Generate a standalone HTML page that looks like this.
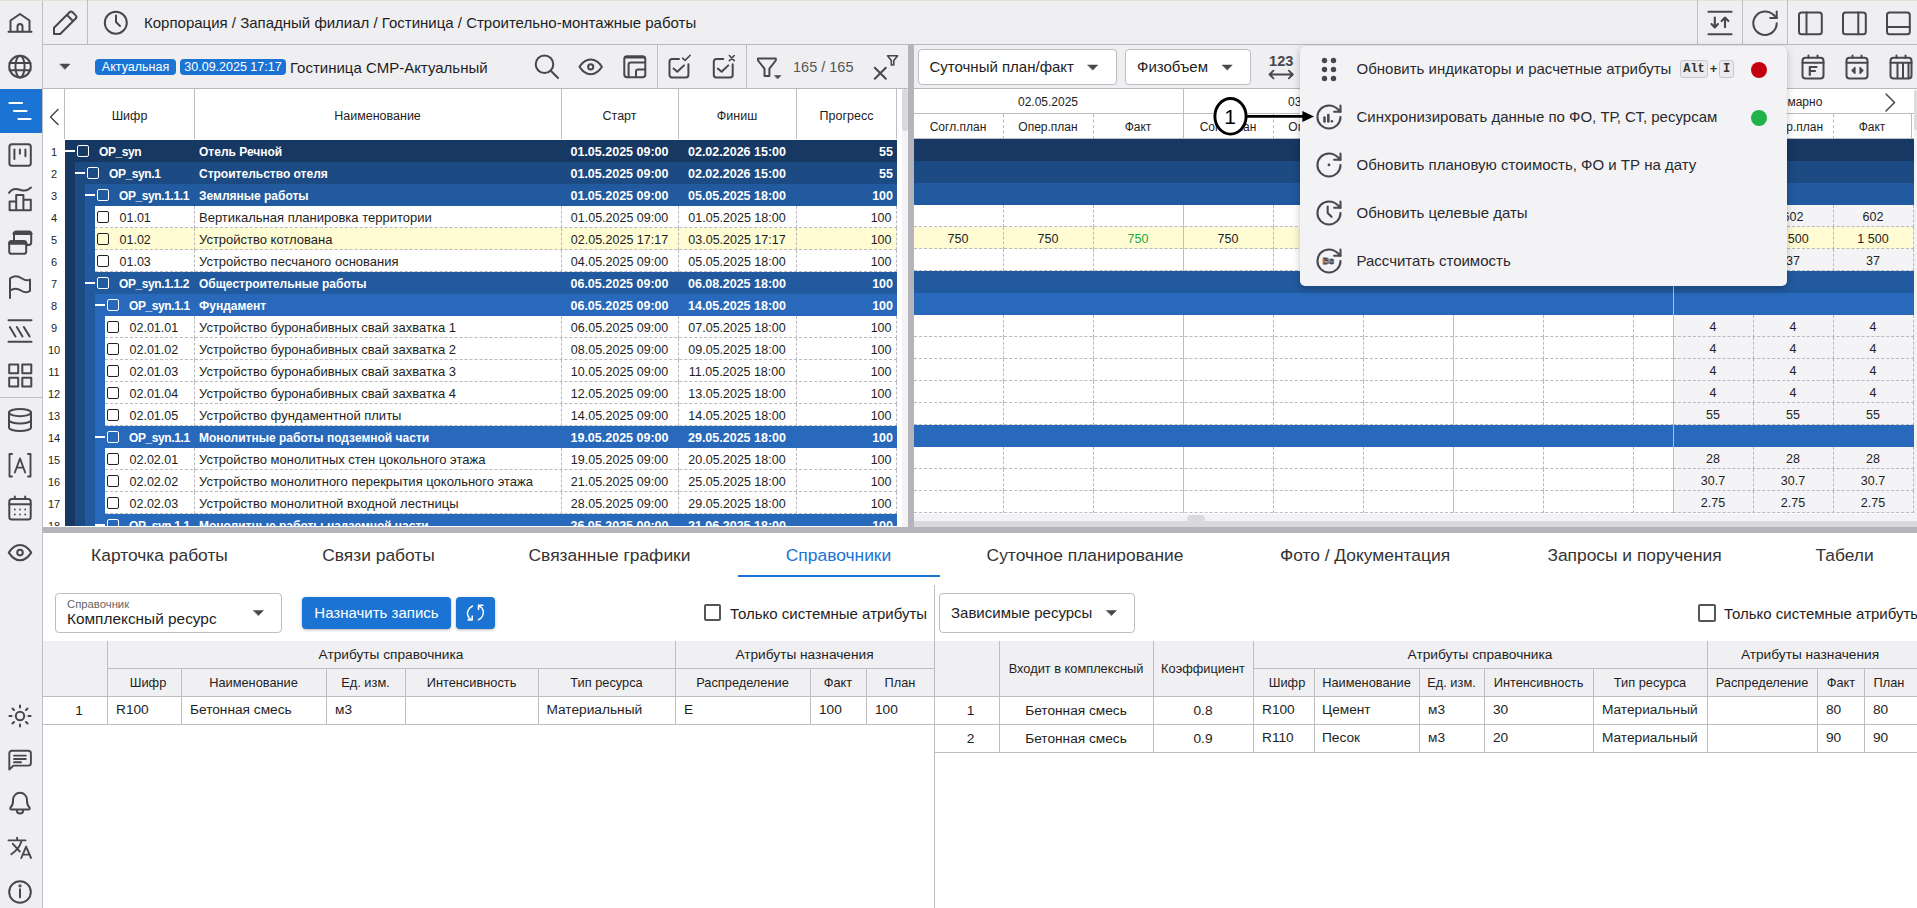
<!DOCTYPE html><html><head><meta charset="utf-8"><style>
*{box-sizing:border-box;margin:0;padding:0}
html,body{width:1917px;height:908px;overflow:hidden;background:#fff;font-family:"Liberation Sans",sans-serif;color:#222}
.t{position:absolute;white-space:nowrap}
svg{overflow:visible}
</style></head><body><div style="position:absolute;left:0px;top:0px;width:42px;height:908px;background:#efeff2;"></div><div style="position:absolute;left:42px;top:0px;width:1px;height:908px;background:#bdbdc4;"></div><div style="position:absolute;left:0px;top:89px;width:42px;height:44px;background:#1b74d3;"></div><div style="position:absolute;left:0px;top:397px;width:42px;height:1px;background:#bdbdc4;"></div><div style="position:absolute;left:43px;top:0px;width:1874px;height:44px;background:#efeff2;"></div><div style="position:absolute;left:0px;top:0px;width:1917px;height:1px;background:#dde5d6;"></div><div style="position:absolute;left:43px;top:44px;width:1874px;height:1px;background:#b8b8bf;"></div><div style="position:absolute;left:87px;top:0px;width:1px;height:44px;background:#bdbdc4;"></div><div class="t" style="left:144px;top:8px;line-height:30px;font-size:15px;color:#1e1e1e;font-weight:400;">Корпорация / Западный филиал / Гостиница / Строительно-монтажные работы</div><div style="position:absolute;left:1697px;top:0px;width:1px;height:44px;background:#bdbdc4;"></div><div style="position:absolute;left:1742px;top:0px;width:1px;height:44px;background:#bdbdc4;"></div><div style="position:absolute;left:1787px;top:0px;width:1px;height:44px;background:#bdbdc4;"></div><div style="position:absolute;left:43px;top:45px;width:865px;height:43px;background:#efeff2;"></div><div style="position:absolute;left:43px;top:88px;width:865px;height:1px;background:#b8b8bf;"></div><div style="position:absolute;left:657px;top:45px;width:1px;height:43px;background:#bdbdc4;"></div><div style="position:absolute;left:746px;top:45px;width:1px;height:43px;background:#bdbdc4;"></div><div style="position:absolute;left:95px;top:59px;width:81px;height:16px;background:#1b74d3;border-radius:4px;"></div><div class="t" style="left:-164.5px;width:600px;text-align:center;top:54.5px;line-height:25.0px;font-size:12.5px;color:#fff;font-weight:400;">Актуальная</div><div style="position:absolute;left:180px;top:59px;width:106px;height:16px;background:#1b74d3;border-radius:4px;"></div><div class="t" style="left:-67px;width:600px;text-align:center;top:54.5px;line-height:25.0px;font-size:12.5px;color:#fff;font-weight:400;">30.09.2025 17:17</div><div class="t" style="left:290px;top:52.5px;line-height:30px;font-size:15px;color:#1e1e1e;font-weight:400;">Гостиница СМР-Актуальный</div><div class="t" style="left:793px;top:52.5px;line-height:29.0px;font-size:14.5px;color:#555;font-weight:400;">165 / 165</div><div style="position:absolute;left:908px;top:45px;width:6px;height:482px;background:#b4b4ba;"></div><div style="position:absolute;left:914px;top:45px;width:1003px;height:43px;background:#efeff2;"></div><div style="position:absolute;left:914px;top:88px;width:1003px;height:1px;background:#b8b8bf;"></div><div style="position:absolute;left:918px;top:49px;width:199px;height:36px;background:#fff;border:1px solid #bdbdc4;border-radius:4px;"></div><div class="t" style="left:929.5px;top:52px;line-height:30px;font-size:15px;color:#1e1e1e;font-weight:400;">Суточный план/факт</div><div style="position:absolute;left:1125px;top:49px;width:126px;height:36px;background:#fff;border:1px solid #bdbdc4;border-radius:4px;"></div><div class="t" style="left:1137px;top:52px;line-height:30px;font-size:15px;color:#1e1e1e;font-weight:400;">Физобъем</div><div style="position:absolute;left:43px;top:89px;width:854px;height:437px;overflow:hidden;background:#fff"><div style="position:absolute;left:21px;top:0px;width:1px;height:50px;background:#bdbdc4;"></div><div style="position:absolute;left:151px;top:0px;width:1px;height:50px;background:#bdbdc4;"></div><div style="position:absolute;left:518px;top:0px;width:1px;height:50px;background:#bdbdc4;"></div><div style="position:absolute;left:635px;top:0px;width:1px;height:50px;background:#bdbdc4;"></div><div style="position:absolute;left:753px;top:0px;width:1px;height:50px;background:#bdbdc4;"></div><div style="position:absolute;left:853px;top:0px;width:1px;height:50px;background:#bdbdc4;"></div><div class="t" style="left:-213.5px;width:600px;text-align:center;top:14.5px;line-height:25.0px;font-size:12.5px;color:#1e1e1e;font-weight:400;">Шифр</div><div class="t" style="left:34.5px;width:600px;text-align:center;top:14.5px;line-height:25.0px;font-size:12.5px;color:#1e1e1e;font-weight:400;">Наименование</div><div class="t" style="left:276.5px;width:600px;text-align:center;top:14.5px;line-height:25.0px;font-size:12.5px;color:#1e1e1e;font-weight:400;">Старт</div><div class="t" style="left:394px;width:600px;text-align:center;top:14.5px;line-height:25.0px;font-size:12.5px;color:#1e1e1e;font-weight:400;">Финиш</div><div class="t" style="left:503.5px;width:600px;text-align:center;top:14.5px;line-height:25.0px;font-size:12.5px;color:#1e1e1e;font-weight:400;">Прогресс</div><div style="position:absolute;left:0px;top:51px;width:21px;height:400px;background:#fff;"></div><div class="t" style="left:-289px;width:600px;text-align:center;top:52.19999999999999px;line-height:22px;font-size:11px;color:#1e1e1e;font-weight:400;">1</div><div style="position:absolute;left:22px;top:51px;width:832px;height:22px;background:#173862;"></div><div style="position:absolute;left:22px;top:61px;width:10px;height:2px;background:#fff;"></div><div style="position:absolute;left:34px;top:56px;width:12px;height:12px;border:1.5px solid #fff;border-radius:2px;"></div><div class="t" style="left:56px;top:51.19999999999999px;line-height:24px;font-size:12px;color:#fff;font-weight:700;letter-spacing:-0.4px">OP_syn</div><div class="t" style="left:156px;top:51.19999999999999px;line-height:24px;font-size:12px;color:#fff;font-weight:700;">Отель Речной</div><div class="t" style="left:276.5px;width:600px;text-align:center;top:50.69999999999999px;line-height:25.0px;font-size:12.5px;color:#fff;font-weight:700;">01.05.2025 09:00</div><div class="t" style="left:394px;width:600px;text-align:center;top:50.69999999999999px;line-height:25.0px;font-size:12.5px;color:#fff;font-weight:700;">02.02.2026 15:00</div><div class="t" style="left:250px;width:600px;text-align:right;top:50.69999999999999px;line-height:25.0px;font-size:12.5px;color:#fff;font-weight:700;">55</div><div class="t" style="left:-289px;width:600px;text-align:center;top:74.19999999999999px;line-height:22px;font-size:11px;color:#1e1e1e;font-weight:400;">2</div><div style="position:absolute;left:22px;top:73px;width:10px;height:22px;background:#173862;"></div><div style="position:absolute;left:32px;top:73px;width:822px;height:22px;background:#1c4a82;"></div><div style="position:absolute;left:32px;top:83px;width:10px;height:2px;background:#fff;"></div><div style="position:absolute;left:44px;top:78px;width:12px;height:12px;border:1.5px solid #fff;border-radius:2px;"></div><div class="t" style="left:66px;top:73.19999999999999px;line-height:24px;font-size:12px;color:#fff;font-weight:700;letter-spacing:-0.4px">OP_syn.1</div><div class="t" style="left:156px;top:73.19999999999999px;line-height:24px;font-size:12px;color:#fff;font-weight:700;">Строительство отеля</div><div class="t" style="left:276.5px;width:600px;text-align:center;top:72.69999999999999px;line-height:25.0px;font-size:12.5px;color:#fff;font-weight:700;">01.05.2025 09:00</div><div class="t" style="left:394px;width:600px;text-align:center;top:72.69999999999999px;line-height:25.0px;font-size:12.5px;color:#fff;font-weight:700;">02.02.2026 15:00</div><div class="t" style="left:250px;width:600px;text-align:right;top:72.69999999999999px;line-height:25.0px;font-size:12.5px;color:#fff;font-weight:700;">55</div><div class="t" style="left:-289px;width:600px;text-align:center;top:96.19999999999999px;line-height:22px;font-size:11px;color:#1e1e1e;font-weight:400;">3</div><div style="position:absolute;left:22px;top:95px;width:10px;height:22px;background:#173862;"></div><div style="position:absolute;left:32px;top:95px;width:10px;height:22px;background:#1c4a82;"></div><div style="position:absolute;left:42px;top:95px;width:812px;height:22px;background:#215a9e;"></div><div style="position:absolute;left:42px;top:105px;width:10px;height:2px;background:#fff;"></div><div style="position:absolute;left:54px;top:100px;width:12px;height:12px;border:1.5px solid #fff;border-radius:2px;"></div><div class="t" style="left:76px;top:95.19999999999999px;line-height:24px;font-size:12px;color:#fff;font-weight:700;letter-spacing:-0.4px">OP_syn.1.1.1</div><div class="t" style="left:156px;top:95.19999999999999px;line-height:24px;font-size:12px;color:#fff;font-weight:700;">Земляные работы</div><div class="t" style="left:276.5px;width:600px;text-align:center;top:94.69999999999999px;line-height:25.0px;font-size:12.5px;color:#fff;font-weight:700;">01.05.2025 09:00</div><div class="t" style="left:394px;width:600px;text-align:center;top:94.69999999999999px;line-height:25.0px;font-size:12.5px;color:#fff;font-weight:700;">05.05.2025 18:00</div><div class="t" style="left:250px;width:600px;text-align:right;top:94.69999999999999px;line-height:25.0px;font-size:12.5px;color:#fff;font-weight:700;">100</div><div class="t" style="left:-289px;width:600px;text-align:center;top:118.19999999999999px;line-height:22px;font-size:11px;color:#1e1e1e;font-weight:400;">4</div><div style="position:absolute;left:22px;top:117px;width:10px;height:22px;background:#173862;"></div><div style="position:absolute;left:32px;top:117px;width:10px;height:22px;background:#1c4a82;"></div><div style="position:absolute;left:42px;top:117px;width:10px;height:22px;background:#215a9e;"></div><div style="position:absolute;left:52px;top:117px;width:802px;height:22px;background:#fff;"></div><div style="position:absolute;left:52px;top:138px;width:802px;height:1px;border-top:1px dashed #b9b9be;"></div><div style="position:absolute;left:151px;top:117px;width:1px;height:22px;border-left:1px dashed #b9b9be;"></div><div style="position:absolute;left:518px;top:117px;width:1px;height:22px;border-left:1px dashed #b9b9be;"></div><div style="position:absolute;left:635px;top:117px;width:1px;height:22px;border-left:1px dashed #b9b9be;"></div><div style="position:absolute;left:753px;top:117px;width:1px;height:22px;border-left:1px dashed #b9b9be;"></div><div style="position:absolute;left:853px;top:117px;width:1px;height:22px;border-left:1px dashed #b9b9be;"></div><div style="position:absolute;left:54px;top:122px;width:12px;height:12px;border:1.5px solid #222;border-radius:2px;"></div><div class="t" style="left:76.5px;top:116.69999999999999px;line-height:25.0px;font-size:12.5px;color:#1e1e1e;font-weight:400;">01.01</div><div class="t" style="left:156px;top:116.19999999999999px;line-height:26px;font-size:13px;color:#1e1e1e;font-weight:400;">Вертикальная планировка территории</div><div class="t" style="left:276.5px;width:600px;text-align:center;top:116.69999999999999px;line-height:25.0px;font-size:12.5px;color:#1e1e1e;font-weight:400;">01.05.2025 09:00</div><div class="t" style="left:394px;width:600px;text-align:center;top:116.69999999999999px;line-height:25.0px;font-size:12.5px;color:#1e1e1e;font-weight:400;">01.05.2025 18:00</div><div class="t" style="left:248.5px;width:600px;text-align:right;top:116.69999999999999px;line-height:25.0px;font-size:12.5px;color:#1e1e1e;font-weight:400;">100</div><div class="t" style="left:-289px;width:600px;text-align:center;top:140.2px;line-height:22px;font-size:11px;color:#1e1e1e;font-weight:400;">5</div><div style="position:absolute;left:22px;top:139px;width:10px;height:22px;background:#173862;"></div><div style="position:absolute;left:32px;top:139px;width:10px;height:22px;background:#1c4a82;"></div><div style="position:absolute;left:42px;top:139px;width:10px;height:22px;background:#215a9e;"></div><div style="position:absolute;left:52px;top:139px;width:802px;height:22px;background:#fffbd3;"></div><div style="position:absolute;left:52px;top:160px;width:802px;height:1px;border-top:1px dashed #b9b9be;"></div><div style="position:absolute;left:151px;top:139px;width:1px;height:22px;border-left:1px dashed #b9b9be;"></div><div style="position:absolute;left:518px;top:139px;width:1px;height:22px;border-left:1px dashed #b9b9be;"></div><div style="position:absolute;left:635px;top:139px;width:1px;height:22px;border-left:1px dashed #b9b9be;"></div><div style="position:absolute;left:753px;top:139px;width:1px;height:22px;border-left:1px dashed #b9b9be;"></div><div style="position:absolute;left:853px;top:139px;width:1px;height:22px;border-left:1px dashed #b9b9be;"></div><div style="position:absolute;left:54px;top:144px;width:12px;height:12px;border:1.5px solid #222;border-radius:2px;"></div><div class="t" style="left:76.5px;top:138.7px;line-height:25.0px;font-size:12.5px;color:#1e1e1e;font-weight:400;">01.02</div><div class="t" style="left:156px;top:138.2px;line-height:26px;font-size:13px;color:#1e1e1e;font-weight:400;">Устройство котлована</div><div class="t" style="left:276.5px;width:600px;text-align:center;top:138.7px;line-height:25.0px;font-size:12.5px;color:#1e1e1e;font-weight:400;">02.05.2025 17:17</div><div class="t" style="left:394px;width:600px;text-align:center;top:138.7px;line-height:25.0px;font-size:12.5px;color:#1e1e1e;font-weight:400;">03.05.2025 17:17</div><div class="t" style="left:248.5px;width:600px;text-align:right;top:138.7px;line-height:25.0px;font-size:12.5px;color:#1e1e1e;font-weight:400;">100</div><div class="t" style="left:-289px;width:600px;text-align:center;top:162.2px;line-height:22px;font-size:11px;color:#1e1e1e;font-weight:400;">6</div><div style="position:absolute;left:22px;top:161px;width:10px;height:22px;background:#173862;"></div><div style="position:absolute;left:32px;top:161px;width:10px;height:22px;background:#1c4a82;"></div><div style="position:absolute;left:42px;top:161px;width:10px;height:22px;background:#215a9e;"></div><div style="position:absolute;left:52px;top:161px;width:802px;height:22px;background:#fff;"></div><div style="position:absolute;left:52px;top:182px;width:802px;height:1px;border-top:1px dashed #b9b9be;"></div><div style="position:absolute;left:151px;top:161px;width:1px;height:22px;border-left:1px dashed #b9b9be;"></div><div style="position:absolute;left:518px;top:161px;width:1px;height:22px;border-left:1px dashed #b9b9be;"></div><div style="position:absolute;left:635px;top:161px;width:1px;height:22px;border-left:1px dashed #b9b9be;"></div><div style="position:absolute;left:753px;top:161px;width:1px;height:22px;border-left:1px dashed #b9b9be;"></div><div style="position:absolute;left:853px;top:161px;width:1px;height:22px;border-left:1px dashed #b9b9be;"></div><div style="position:absolute;left:54px;top:166px;width:12px;height:12px;border:1.5px solid #222;border-radius:2px;"></div><div class="t" style="left:76.5px;top:160.7px;line-height:25.0px;font-size:12.5px;color:#1e1e1e;font-weight:400;">01.03</div><div class="t" style="left:156px;top:160.2px;line-height:26px;font-size:13px;color:#1e1e1e;font-weight:400;">Устройство песчаного основания</div><div class="t" style="left:276.5px;width:600px;text-align:center;top:160.7px;line-height:25.0px;font-size:12.5px;color:#1e1e1e;font-weight:400;">04.05.2025 09:00</div><div class="t" style="left:394px;width:600px;text-align:center;top:160.7px;line-height:25.0px;font-size:12.5px;color:#1e1e1e;font-weight:400;">05.05.2025 18:00</div><div class="t" style="left:248.5px;width:600px;text-align:right;top:160.7px;line-height:25.0px;font-size:12.5px;color:#1e1e1e;font-weight:400;">100</div><div class="t" style="left:-289px;width:600px;text-align:center;top:184.2px;line-height:22px;font-size:11px;color:#1e1e1e;font-weight:400;">7</div><div style="position:absolute;left:22px;top:183px;width:10px;height:22px;background:#173862;"></div><div style="position:absolute;left:32px;top:183px;width:10px;height:22px;background:#1c4a82;"></div><div style="position:absolute;left:42px;top:183px;width:812px;height:22px;background:#215a9e;"></div><div style="position:absolute;left:42px;top:193px;width:10px;height:2px;background:#fff;"></div><div style="position:absolute;left:54px;top:188px;width:12px;height:12px;border:1.5px solid #fff;border-radius:2px;"></div><div class="t" style="left:76px;top:183.2px;line-height:24px;font-size:12px;color:#fff;font-weight:700;letter-spacing:-0.4px">OP_syn.1.1.2</div><div class="t" style="left:156px;top:183.2px;line-height:24px;font-size:12px;color:#fff;font-weight:700;">Общестроительные работы</div><div class="t" style="left:276.5px;width:600px;text-align:center;top:182.7px;line-height:25.0px;font-size:12.5px;color:#fff;font-weight:700;">06.05.2025 09:00</div><div class="t" style="left:394px;width:600px;text-align:center;top:182.7px;line-height:25.0px;font-size:12.5px;color:#fff;font-weight:700;">06.08.2025 18:00</div><div class="t" style="left:250px;width:600px;text-align:right;top:182.7px;line-height:25.0px;font-size:12.5px;color:#fff;font-weight:700;">100</div><div class="t" style="left:-289px;width:600px;text-align:center;top:206.2px;line-height:22px;font-size:11px;color:#1e1e1e;font-weight:400;">8</div><div style="position:absolute;left:22px;top:205px;width:10px;height:22px;background:#173862;"></div><div style="position:absolute;left:32px;top:205px;width:10px;height:22px;background:#1c4a82;"></div><div style="position:absolute;left:42px;top:205px;width:10px;height:22px;background:#215a9e;"></div><div style="position:absolute;left:52px;top:205px;width:802px;height:22px;background:#2869bb;"></div><div style="position:absolute;left:52px;top:215px;width:10px;height:2px;background:#fff;"></div><div style="position:absolute;left:64px;top:210px;width:12px;height:12px;border:1.5px solid #fff;border-radius:2px;"></div><div class="t" style="left:86px;top:205.2px;line-height:24px;font-size:12px;color:#fff;font-weight:700;letter-spacing:-0.4px">OP_syn.1.1</div><div class="t" style="left:156px;top:205.2px;line-height:24px;font-size:12px;color:#fff;font-weight:700;">Фундамент</div><div class="t" style="left:276.5px;width:600px;text-align:center;top:204.7px;line-height:25.0px;font-size:12.5px;color:#fff;font-weight:700;">06.05.2025 09:00</div><div class="t" style="left:394px;width:600px;text-align:center;top:204.7px;line-height:25.0px;font-size:12.5px;color:#fff;font-weight:700;">14.05.2025 18:00</div><div class="t" style="left:250px;width:600px;text-align:right;top:204.7px;line-height:25.0px;font-size:12.5px;color:#fff;font-weight:700;">100</div><div class="t" style="left:-289px;width:600px;text-align:center;top:228.2px;line-height:22px;font-size:11px;color:#1e1e1e;font-weight:400;">9</div><div style="position:absolute;left:22px;top:227px;width:10px;height:22px;background:#173862;"></div><div style="position:absolute;left:32px;top:227px;width:10px;height:22px;background:#1c4a82;"></div><div style="position:absolute;left:42px;top:227px;width:10px;height:22px;background:#215a9e;"></div><div style="position:absolute;left:52px;top:227px;width:10px;height:22px;background:#2869bb;"></div><div style="position:absolute;left:62px;top:227px;width:792px;height:22px;background:#fff;"></div><div style="position:absolute;left:62px;top:248px;width:792px;height:1px;border-top:1px dashed #b9b9be;"></div><div style="position:absolute;left:151px;top:227px;width:1px;height:22px;border-left:1px dashed #b9b9be;"></div><div style="position:absolute;left:518px;top:227px;width:1px;height:22px;border-left:1px dashed #b9b9be;"></div><div style="position:absolute;left:635px;top:227px;width:1px;height:22px;border-left:1px dashed #b9b9be;"></div><div style="position:absolute;left:753px;top:227px;width:1px;height:22px;border-left:1px dashed #b9b9be;"></div><div style="position:absolute;left:853px;top:227px;width:1px;height:22px;border-left:1px dashed #b9b9be;"></div><div style="position:absolute;left:64px;top:232px;width:12px;height:12px;border:1.5px solid #222;border-radius:2px;"></div><div class="t" style="left:86.5px;top:226.7px;line-height:25.0px;font-size:12.5px;color:#1e1e1e;font-weight:400;">02.01.01</div><div class="t" style="left:156px;top:226.2px;line-height:26px;font-size:13px;color:#1e1e1e;font-weight:400;">Устройство буронабивных свай захватка 1</div><div class="t" style="left:276.5px;width:600px;text-align:center;top:226.7px;line-height:25.0px;font-size:12.5px;color:#1e1e1e;font-weight:400;">06.05.2025 09:00</div><div class="t" style="left:394px;width:600px;text-align:center;top:226.7px;line-height:25.0px;font-size:12.5px;color:#1e1e1e;font-weight:400;">07.05.2025 18:00</div><div class="t" style="left:248.5px;width:600px;text-align:right;top:226.7px;line-height:25.0px;font-size:12.5px;color:#1e1e1e;font-weight:400;">100</div><div class="t" style="left:-289px;width:600px;text-align:center;top:250.2px;line-height:22px;font-size:11px;color:#1e1e1e;font-weight:400;">10</div><div style="position:absolute;left:22px;top:249px;width:10px;height:22px;background:#173862;"></div><div style="position:absolute;left:32px;top:249px;width:10px;height:22px;background:#1c4a82;"></div><div style="position:absolute;left:42px;top:249px;width:10px;height:22px;background:#215a9e;"></div><div style="position:absolute;left:52px;top:249px;width:10px;height:22px;background:#2869bb;"></div><div style="position:absolute;left:62px;top:249px;width:792px;height:22px;background:#fff;"></div><div style="position:absolute;left:62px;top:270px;width:792px;height:1px;border-top:1px dashed #b9b9be;"></div><div style="position:absolute;left:151px;top:249px;width:1px;height:22px;border-left:1px dashed #b9b9be;"></div><div style="position:absolute;left:518px;top:249px;width:1px;height:22px;border-left:1px dashed #b9b9be;"></div><div style="position:absolute;left:635px;top:249px;width:1px;height:22px;border-left:1px dashed #b9b9be;"></div><div style="position:absolute;left:753px;top:249px;width:1px;height:22px;border-left:1px dashed #b9b9be;"></div><div style="position:absolute;left:853px;top:249px;width:1px;height:22px;border-left:1px dashed #b9b9be;"></div><div style="position:absolute;left:64px;top:254px;width:12px;height:12px;border:1.5px solid #222;border-radius:2px;"></div><div class="t" style="left:86.5px;top:248.7px;line-height:25.0px;font-size:12.5px;color:#1e1e1e;font-weight:400;">02.01.02</div><div class="t" style="left:156px;top:248.2px;line-height:26px;font-size:13px;color:#1e1e1e;font-weight:400;">Устройство буронабивных свай захватка 2</div><div class="t" style="left:276.5px;width:600px;text-align:center;top:248.7px;line-height:25.0px;font-size:12.5px;color:#1e1e1e;font-weight:400;">08.05.2025 09:00</div><div class="t" style="left:394px;width:600px;text-align:center;top:248.7px;line-height:25.0px;font-size:12.5px;color:#1e1e1e;font-weight:400;">09.05.2025 18:00</div><div class="t" style="left:248.5px;width:600px;text-align:right;top:248.7px;line-height:25.0px;font-size:12.5px;color:#1e1e1e;font-weight:400;">100</div><div class="t" style="left:-289px;width:600px;text-align:center;top:272.2px;line-height:22px;font-size:11px;color:#1e1e1e;font-weight:400;">11</div><div style="position:absolute;left:22px;top:271px;width:10px;height:22px;background:#173862;"></div><div style="position:absolute;left:32px;top:271px;width:10px;height:22px;background:#1c4a82;"></div><div style="position:absolute;left:42px;top:271px;width:10px;height:22px;background:#215a9e;"></div><div style="position:absolute;left:52px;top:271px;width:10px;height:22px;background:#2869bb;"></div><div style="position:absolute;left:62px;top:271px;width:792px;height:22px;background:#fff;"></div><div style="position:absolute;left:62px;top:292px;width:792px;height:1px;border-top:1px dashed #b9b9be;"></div><div style="position:absolute;left:151px;top:271px;width:1px;height:22px;border-left:1px dashed #b9b9be;"></div><div style="position:absolute;left:518px;top:271px;width:1px;height:22px;border-left:1px dashed #b9b9be;"></div><div style="position:absolute;left:635px;top:271px;width:1px;height:22px;border-left:1px dashed #b9b9be;"></div><div style="position:absolute;left:753px;top:271px;width:1px;height:22px;border-left:1px dashed #b9b9be;"></div><div style="position:absolute;left:853px;top:271px;width:1px;height:22px;border-left:1px dashed #b9b9be;"></div><div style="position:absolute;left:64px;top:276px;width:12px;height:12px;border:1.5px solid #222;border-radius:2px;"></div><div class="t" style="left:86.5px;top:270.7px;line-height:25.0px;font-size:12.5px;color:#1e1e1e;font-weight:400;">02.01.03</div><div class="t" style="left:156px;top:270.2px;line-height:26px;font-size:13px;color:#1e1e1e;font-weight:400;">Устройство буронабивных свай захватка 3</div><div class="t" style="left:276.5px;width:600px;text-align:center;top:270.7px;line-height:25.0px;font-size:12.5px;color:#1e1e1e;font-weight:400;">10.05.2025 09:00</div><div class="t" style="left:394px;width:600px;text-align:center;top:270.7px;line-height:25.0px;font-size:12.5px;color:#1e1e1e;font-weight:400;">11.05.2025 18:00</div><div class="t" style="left:248.5px;width:600px;text-align:right;top:270.7px;line-height:25.0px;font-size:12.5px;color:#1e1e1e;font-weight:400;">100</div><div class="t" style="left:-289px;width:600px;text-align:center;top:294.2px;line-height:22px;font-size:11px;color:#1e1e1e;font-weight:400;">12</div><div style="position:absolute;left:22px;top:293px;width:10px;height:22px;background:#173862;"></div><div style="position:absolute;left:32px;top:293px;width:10px;height:22px;background:#1c4a82;"></div><div style="position:absolute;left:42px;top:293px;width:10px;height:22px;background:#215a9e;"></div><div style="position:absolute;left:52px;top:293px;width:10px;height:22px;background:#2869bb;"></div><div style="position:absolute;left:62px;top:293px;width:792px;height:22px;background:#fff;"></div><div style="position:absolute;left:62px;top:314px;width:792px;height:1px;border-top:1px dashed #b9b9be;"></div><div style="position:absolute;left:151px;top:293px;width:1px;height:22px;border-left:1px dashed #b9b9be;"></div><div style="position:absolute;left:518px;top:293px;width:1px;height:22px;border-left:1px dashed #b9b9be;"></div><div style="position:absolute;left:635px;top:293px;width:1px;height:22px;border-left:1px dashed #b9b9be;"></div><div style="position:absolute;left:753px;top:293px;width:1px;height:22px;border-left:1px dashed #b9b9be;"></div><div style="position:absolute;left:853px;top:293px;width:1px;height:22px;border-left:1px dashed #b9b9be;"></div><div style="position:absolute;left:64px;top:298px;width:12px;height:12px;border:1.5px solid #222;border-radius:2px;"></div><div class="t" style="left:86.5px;top:292.7px;line-height:25.0px;font-size:12.5px;color:#1e1e1e;font-weight:400;">02.01.04</div><div class="t" style="left:156px;top:292.2px;line-height:26px;font-size:13px;color:#1e1e1e;font-weight:400;">Устройство буронабивных свай захватка 4</div><div class="t" style="left:276.5px;width:600px;text-align:center;top:292.7px;line-height:25.0px;font-size:12.5px;color:#1e1e1e;font-weight:400;">12.05.2025 09:00</div><div class="t" style="left:394px;width:600px;text-align:center;top:292.7px;line-height:25.0px;font-size:12.5px;color:#1e1e1e;font-weight:400;">13.05.2025 18:00</div><div class="t" style="left:248.5px;width:600px;text-align:right;top:292.7px;line-height:25.0px;font-size:12.5px;color:#1e1e1e;font-weight:400;">100</div><div class="t" style="left:-289px;width:600px;text-align:center;top:316.2px;line-height:22px;font-size:11px;color:#1e1e1e;font-weight:400;">13</div><div style="position:absolute;left:22px;top:315px;width:10px;height:22px;background:#173862;"></div><div style="position:absolute;left:32px;top:315px;width:10px;height:22px;background:#1c4a82;"></div><div style="position:absolute;left:42px;top:315px;width:10px;height:22px;background:#215a9e;"></div><div style="position:absolute;left:52px;top:315px;width:10px;height:22px;background:#2869bb;"></div><div style="position:absolute;left:62px;top:315px;width:792px;height:22px;background:#fff;"></div><div style="position:absolute;left:62px;top:336px;width:792px;height:1px;border-top:1px dashed #b9b9be;"></div><div style="position:absolute;left:151px;top:315px;width:1px;height:22px;border-left:1px dashed #b9b9be;"></div><div style="position:absolute;left:518px;top:315px;width:1px;height:22px;border-left:1px dashed #b9b9be;"></div><div style="position:absolute;left:635px;top:315px;width:1px;height:22px;border-left:1px dashed #b9b9be;"></div><div style="position:absolute;left:753px;top:315px;width:1px;height:22px;border-left:1px dashed #b9b9be;"></div><div style="position:absolute;left:853px;top:315px;width:1px;height:22px;border-left:1px dashed #b9b9be;"></div><div style="position:absolute;left:64px;top:320px;width:12px;height:12px;border:1.5px solid #222;border-radius:2px;"></div><div class="t" style="left:86.5px;top:314.7px;line-height:25.0px;font-size:12.5px;color:#1e1e1e;font-weight:400;">02.01.05</div><div class="t" style="left:156px;top:314.2px;line-height:26px;font-size:13px;color:#1e1e1e;font-weight:400;">Устройство фундаментной плиты</div><div class="t" style="left:276.5px;width:600px;text-align:center;top:314.7px;line-height:25.0px;font-size:12.5px;color:#1e1e1e;font-weight:400;">14.05.2025 09:00</div><div class="t" style="left:394px;width:600px;text-align:center;top:314.7px;line-height:25.0px;font-size:12.5px;color:#1e1e1e;font-weight:400;">14.05.2025 18:00</div><div class="t" style="left:248.5px;width:600px;text-align:right;top:314.7px;line-height:25.0px;font-size:12.5px;color:#1e1e1e;font-weight:400;">100</div><div class="t" style="left:-289px;width:600px;text-align:center;top:338.2px;line-height:22px;font-size:11px;color:#1e1e1e;font-weight:400;">14</div><div style="position:absolute;left:22px;top:337px;width:10px;height:22px;background:#173862;"></div><div style="position:absolute;left:32px;top:337px;width:10px;height:22px;background:#1c4a82;"></div><div style="position:absolute;left:42px;top:337px;width:10px;height:22px;background:#215a9e;"></div><div style="position:absolute;left:52px;top:337px;width:802px;height:22px;background:#2869bb;"></div><div style="position:absolute;left:52px;top:347px;width:10px;height:2px;background:#fff;"></div><div style="position:absolute;left:64px;top:342px;width:12px;height:12px;border:1.5px solid #fff;border-radius:2px;"></div><div class="t" style="left:86px;top:337.2px;line-height:24px;font-size:12px;color:#fff;font-weight:700;letter-spacing:-0.4px">OP_syn.1.1</div><div class="t" style="left:156px;top:337.2px;line-height:24px;font-size:12px;color:#fff;font-weight:700;">Монолитные работы подземной части</div><div class="t" style="left:276.5px;width:600px;text-align:center;top:336.7px;line-height:25.0px;font-size:12.5px;color:#fff;font-weight:700;">19.05.2025 09:00</div><div class="t" style="left:394px;width:600px;text-align:center;top:336.7px;line-height:25.0px;font-size:12.5px;color:#fff;font-weight:700;">29.05.2025 18:00</div><div class="t" style="left:250px;width:600px;text-align:right;top:336.7px;line-height:25.0px;font-size:12.5px;color:#fff;font-weight:700;">100</div><div class="t" style="left:-289px;width:600px;text-align:center;top:360.2px;line-height:22px;font-size:11px;color:#1e1e1e;font-weight:400;">15</div><div style="position:absolute;left:22px;top:359px;width:10px;height:22px;background:#173862;"></div><div style="position:absolute;left:32px;top:359px;width:10px;height:22px;background:#1c4a82;"></div><div style="position:absolute;left:42px;top:359px;width:10px;height:22px;background:#215a9e;"></div><div style="position:absolute;left:52px;top:359px;width:10px;height:22px;background:#2869bb;"></div><div style="position:absolute;left:62px;top:359px;width:792px;height:22px;background:#fff;"></div><div style="position:absolute;left:62px;top:380px;width:792px;height:1px;border-top:1px dashed #b9b9be;"></div><div style="position:absolute;left:151px;top:359px;width:1px;height:22px;border-left:1px dashed #b9b9be;"></div><div style="position:absolute;left:518px;top:359px;width:1px;height:22px;border-left:1px dashed #b9b9be;"></div><div style="position:absolute;left:635px;top:359px;width:1px;height:22px;border-left:1px dashed #b9b9be;"></div><div style="position:absolute;left:753px;top:359px;width:1px;height:22px;border-left:1px dashed #b9b9be;"></div><div style="position:absolute;left:853px;top:359px;width:1px;height:22px;border-left:1px dashed #b9b9be;"></div><div style="position:absolute;left:64px;top:364px;width:12px;height:12px;border:1.5px solid #222;border-radius:2px;"></div><div class="t" style="left:86.5px;top:358.7px;line-height:25.0px;font-size:12.5px;color:#1e1e1e;font-weight:400;">02.02.01</div><div class="t" style="left:156px;top:358.2px;line-height:26px;font-size:13px;color:#1e1e1e;font-weight:400;">Устройство монолитных стен цокольного этажа</div><div class="t" style="left:276.5px;width:600px;text-align:center;top:358.7px;line-height:25.0px;font-size:12.5px;color:#1e1e1e;font-weight:400;">19.05.2025 09:00</div><div class="t" style="left:394px;width:600px;text-align:center;top:358.7px;line-height:25.0px;font-size:12.5px;color:#1e1e1e;font-weight:400;">20.05.2025 18:00</div><div class="t" style="left:248.5px;width:600px;text-align:right;top:358.7px;line-height:25.0px;font-size:12.5px;color:#1e1e1e;font-weight:400;">100</div><div class="t" style="left:-289px;width:600px;text-align:center;top:382.2px;line-height:22px;font-size:11px;color:#1e1e1e;font-weight:400;">16</div><div style="position:absolute;left:22px;top:381px;width:10px;height:22px;background:#173862;"></div><div style="position:absolute;left:32px;top:381px;width:10px;height:22px;background:#1c4a82;"></div><div style="position:absolute;left:42px;top:381px;width:10px;height:22px;background:#215a9e;"></div><div style="position:absolute;left:52px;top:381px;width:10px;height:22px;background:#2869bb;"></div><div style="position:absolute;left:62px;top:381px;width:792px;height:22px;background:#fff;"></div><div style="position:absolute;left:62px;top:402px;width:792px;height:1px;border-top:1px dashed #b9b9be;"></div><div style="position:absolute;left:151px;top:381px;width:1px;height:22px;border-left:1px dashed #b9b9be;"></div><div style="position:absolute;left:518px;top:381px;width:1px;height:22px;border-left:1px dashed #b9b9be;"></div><div style="position:absolute;left:635px;top:381px;width:1px;height:22px;border-left:1px dashed #b9b9be;"></div><div style="position:absolute;left:753px;top:381px;width:1px;height:22px;border-left:1px dashed #b9b9be;"></div><div style="position:absolute;left:853px;top:381px;width:1px;height:22px;border-left:1px dashed #b9b9be;"></div><div style="position:absolute;left:64px;top:386px;width:12px;height:12px;border:1.5px solid #222;border-radius:2px;"></div><div class="t" style="left:86.5px;top:380.7px;line-height:25.0px;font-size:12.5px;color:#1e1e1e;font-weight:400;">02.02.02</div><div class="t" style="left:156px;top:380.2px;line-height:26px;font-size:13px;color:#1e1e1e;font-weight:400;">Устройство монолитного перекрытия цокольного этажа</div><div class="t" style="left:276.5px;width:600px;text-align:center;top:380.7px;line-height:25.0px;font-size:12.5px;color:#1e1e1e;font-weight:400;">21.05.2025 09:00</div><div class="t" style="left:394px;width:600px;text-align:center;top:380.7px;line-height:25.0px;font-size:12.5px;color:#1e1e1e;font-weight:400;">25.05.2025 18:00</div><div class="t" style="left:248.5px;width:600px;text-align:right;top:380.7px;line-height:25.0px;font-size:12.5px;color:#1e1e1e;font-weight:400;">100</div><div class="t" style="left:-289px;width:600px;text-align:center;top:404.2px;line-height:22px;font-size:11px;color:#1e1e1e;font-weight:400;">17</div><div style="position:absolute;left:22px;top:403px;width:10px;height:22px;background:#173862;"></div><div style="position:absolute;left:32px;top:403px;width:10px;height:22px;background:#1c4a82;"></div><div style="position:absolute;left:42px;top:403px;width:10px;height:22px;background:#215a9e;"></div><div style="position:absolute;left:52px;top:403px;width:10px;height:22px;background:#2869bb;"></div><div style="position:absolute;left:62px;top:403px;width:792px;height:22px;background:#fff;"></div><div style="position:absolute;left:62px;top:424px;width:792px;height:1px;border-top:1px dashed #b9b9be;"></div><div style="position:absolute;left:151px;top:403px;width:1px;height:22px;border-left:1px dashed #b9b9be;"></div><div style="position:absolute;left:518px;top:403px;width:1px;height:22px;border-left:1px dashed #b9b9be;"></div><div style="position:absolute;left:635px;top:403px;width:1px;height:22px;border-left:1px dashed #b9b9be;"></div><div style="position:absolute;left:753px;top:403px;width:1px;height:22px;border-left:1px dashed #b9b9be;"></div><div style="position:absolute;left:853px;top:403px;width:1px;height:22px;border-left:1px dashed #b9b9be;"></div><div style="position:absolute;left:64px;top:408px;width:12px;height:12px;border:1.5px solid #222;border-radius:2px;"></div><div class="t" style="left:86.5px;top:402.7px;line-height:25.0px;font-size:12.5px;color:#1e1e1e;font-weight:400;">02.02.03</div><div class="t" style="left:156px;top:402.2px;line-height:26px;font-size:13px;color:#1e1e1e;font-weight:400;">Устройство монолитной входной лестницы</div><div class="t" style="left:276.5px;width:600px;text-align:center;top:402.7px;line-height:25.0px;font-size:12.5px;color:#1e1e1e;font-weight:400;">28.05.2025 09:00</div><div class="t" style="left:394px;width:600px;text-align:center;top:402.7px;line-height:25.0px;font-size:12.5px;color:#1e1e1e;font-weight:400;">29.05.2025 18:00</div><div class="t" style="left:248.5px;width:600px;text-align:right;top:402.7px;line-height:25.0px;font-size:12.5px;color:#1e1e1e;font-weight:400;">100</div><div class="t" style="left:-289px;width:600px;text-align:center;top:426.20000000000005px;line-height:22px;font-size:11px;color:#1e1e1e;font-weight:400;">18</div><div style="position:absolute;left:22px;top:425px;width:10px;height:22px;background:#173862;"></div><div style="position:absolute;left:32px;top:425px;width:10px;height:22px;background:#1c4a82;"></div><div style="position:absolute;left:42px;top:425px;width:10px;height:22px;background:#215a9e;"></div><div style="position:absolute;left:52px;top:425px;width:802px;height:22px;background:#2869bb;"></div><div style="position:absolute;left:52px;top:435px;width:10px;height:2px;background:#fff;"></div><div style="position:absolute;left:64px;top:430px;width:12px;height:12px;border:1.5px solid #fff;border-radius:2px;"></div><div class="t" style="left:86px;top:425.20000000000005px;line-height:24px;font-size:12px;color:#fff;font-weight:700;letter-spacing:-0.4px">OP_syn.1.1</div><div class="t" style="left:156px;top:425.20000000000005px;line-height:24px;font-size:12px;color:#fff;font-weight:700;">Монолитные работы надземной части</div><div class="t" style="left:276.5px;width:600px;text-align:center;top:424.70000000000005px;line-height:25.0px;font-size:12.5px;color:#fff;font-weight:700;">26.05.2025 09:00</div><div class="t" style="left:394px;width:600px;text-align:center;top:424.70000000000005px;line-height:25.0px;font-size:12.5px;color:#fff;font-weight:700;">21.06.2025 18:00</div><div class="t" style="left:250px;width:600px;text-align:right;top:424.70000000000005px;line-height:25.0px;font-size:12.5px;color:#fff;font-weight:700;">100</div></div><div style="position:absolute;left:902px;top:89px;width:6px;height:438px;background:#f3f3f5;"></div><div style="position:absolute;left:902px;top:89px;width:5.5px;height:42px;background:#d9d9dc;border-radius:3px;"></div><div style="position:absolute;left:914px;top:89px;width:1000px;height:424px;overflow:hidden;background:#fff"><div style="position:absolute;left:0px;top:24px;width:1000px;height:1px;background:#bdbdc4;"></div><div style="position:absolute;left:0px;top:49px;width:1000px;height:1px;background:#bdbdc4;"></div><div class="t" style="left:-166px;width:600px;text-align:center;top:1px;line-height:24px;font-size:12px;color:#1e1e1e;font-weight:400;">02.05.2025</div><div class="t" style="left:-256px;width:600px;text-align:center;top:26px;line-height:24px;font-size:12px;color:#1e1e1e;font-weight:400;">Согл.план</div><div class="t" style="left:-166px;width:600px;text-align:center;top:26px;line-height:24px;font-size:12px;color:#1e1e1e;font-weight:400;">Опер.план</div><div class="t" style="left:-76px;width:600px;text-align:center;top:26px;line-height:24px;font-size:12px;color:#1e1e1e;font-weight:400;">Факт</div><div style="position:absolute;left:269px;top:0px;width:1px;height:50px;background:#bdbdc4;"></div><div style="position:absolute;left:89px;top:25px;width:1px;height:25px;border-left:1px dashed #b9b9be;"></div><div style="position:absolute;left:179px;top:25px;width:1px;height:25px;border-left:1px dashed #b9b9be;"></div><div class="t" style="left:104px;width:600px;text-align:center;top:1px;line-height:24px;font-size:12px;color:#1e1e1e;font-weight:400;">03.05.2025</div><div class="t" style="left:14px;width:600px;text-align:center;top:26px;line-height:24px;font-size:12px;color:#1e1e1e;font-weight:400;">Согл.план</div><div class="t" style="left:104px;width:600px;text-align:center;top:26px;line-height:24px;font-size:12px;color:#1e1e1e;font-weight:400;">Опер.план</div><div class="t" style="left:194px;width:600px;text-align:center;top:26px;line-height:24px;font-size:12px;color:#1e1e1e;font-weight:400;">Факт</div><div style="position:absolute;left:539px;top:0px;width:1px;height:50px;background:#bdbdc4;"></div><div style="position:absolute;left:359px;top:25px;width:1px;height:25px;border-left:1px dashed #b9b9be;"></div><div style="position:absolute;left:449px;top:25px;width:1px;height:25px;border-left:1px dashed #b9b9be;"></div><div class="t" style="left:374px;width:600px;text-align:center;top:1px;line-height:24px;font-size:12px;color:#1e1e1e;font-weight:400;">04.05.2025</div><div class="t" style="left:284px;width:600px;text-align:center;top:26px;line-height:24px;font-size:12px;color:#1e1e1e;font-weight:400;">Согл.план</div><div class="t" style="left:374px;width:600px;text-align:center;top:26px;line-height:24px;font-size:12px;color:#1e1e1e;font-weight:400;">Опер.план</div><div class="t" style="left:464px;width:600px;text-align:center;top:26px;line-height:24px;font-size:12px;color:#1e1e1e;font-weight:400;">Факт</div><div style="position:absolute;left:809px;top:0px;width:1px;height:50px;background:#bdbdc4;"></div><div style="position:absolute;left:629px;top:25px;width:1px;height:25px;border-left:1px dashed #b9b9be;"></div><div style="position:absolute;left:719px;top:25px;width:1px;height:25px;border-left:1px dashed #b9b9be;"></div><div style="position:absolute;left:0px;top:50px;width:1000px;height:22px;background:#173862;"></div><div style="position:absolute;left:0px;top:72px;width:1000px;height:22px;background:#1c4a82;"></div><div style="position:absolute;left:0px;top:94px;width:1000px;height:22px;background:#215a9e;"></div><div style="position:absolute;left:0px;top:116px;width:1000px;height:22px;background:#fff;"></div><div style="position:absolute;left:0px;top:137px;width:1000px;height:1px;border-top:1px dashed #b9b9be;"></div><div style="position:absolute;left:89px;top:116px;width:1px;height:22px;border-left:1px dashed #b9b9be;"></div><div style="position:absolute;left:179px;top:116px;width:1px;height:22px;border-left:1px dashed #b9b9be;"></div><div style="position:absolute;left:269px;top:116px;width:1px;height:22px;background:#bdbdc4;"></div><div style="position:absolute;left:359px;top:116px;width:1px;height:22px;border-left:1px dashed #b9b9be;"></div><div style="position:absolute;left:449px;top:116px;width:1px;height:22px;border-left:1px dashed #b9b9be;"></div><div style="position:absolute;left:539px;top:116px;width:1px;height:22px;background:#bdbdc4;"></div><div style="position:absolute;left:629px;top:116px;width:1px;height:22px;border-left:1px dashed #b9b9be;"></div><div style="position:absolute;left:719px;top:116px;width:1px;height:22px;border-left:1px dashed #b9b9be;"></div><div style="position:absolute;left:809px;top:116px;width:1px;height:22px;background:#bdbdc4;"></div><div style="position:absolute;left:0px;top:138px;width:1000px;height:22px;background:#fffbd3;"></div><div style="position:absolute;left:0px;top:159px;width:1000px;height:1px;border-top:1px dashed #b9b9be;"></div><div style="position:absolute;left:89px;top:138px;width:1px;height:22px;border-left:1px dashed #b9b9be;"></div><div style="position:absolute;left:179px;top:138px;width:1px;height:22px;border-left:1px dashed #b9b9be;"></div><div style="position:absolute;left:269px;top:138px;width:1px;height:22px;background:#bdbdc4;"></div><div style="position:absolute;left:359px;top:138px;width:1px;height:22px;border-left:1px dashed #b9b9be;"></div><div style="position:absolute;left:449px;top:138px;width:1px;height:22px;border-left:1px dashed #b9b9be;"></div><div style="position:absolute;left:539px;top:138px;width:1px;height:22px;background:#bdbdc4;"></div><div style="position:absolute;left:629px;top:138px;width:1px;height:22px;border-left:1px dashed #b9b9be;"></div><div style="position:absolute;left:719px;top:138px;width:1px;height:22px;border-left:1px dashed #b9b9be;"></div><div style="position:absolute;left:809px;top:138px;width:1px;height:22px;background:#bdbdc4;"></div><div style="position:absolute;left:0px;top:160px;width:1000px;height:22px;background:#fff;"></div><div style="position:absolute;left:0px;top:181px;width:1000px;height:1px;border-top:1px dashed #b9b9be;"></div><div style="position:absolute;left:89px;top:160px;width:1px;height:22px;border-left:1px dashed #b9b9be;"></div><div style="position:absolute;left:179px;top:160px;width:1px;height:22px;border-left:1px dashed #b9b9be;"></div><div style="position:absolute;left:269px;top:160px;width:1px;height:22px;background:#bdbdc4;"></div><div style="position:absolute;left:359px;top:160px;width:1px;height:22px;border-left:1px dashed #b9b9be;"></div><div style="position:absolute;left:449px;top:160px;width:1px;height:22px;border-left:1px dashed #b9b9be;"></div><div style="position:absolute;left:539px;top:160px;width:1px;height:22px;background:#bdbdc4;"></div><div style="position:absolute;left:629px;top:160px;width:1px;height:22px;border-left:1px dashed #b9b9be;"></div><div style="position:absolute;left:719px;top:160px;width:1px;height:22px;border-left:1px dashed #b9b9be;"></div><div style="position:absolute;left:809px;top:160px;width:1px;height:22px;background:#bdbdc4;"></div><div style="position:absolute;left:0px;top:182px;width:1000px;height:22px;background:#215a9e;"></div><div style="position:absolute;left:0px;top:204px;width:1000px;height:22px;background:#2869bb;"></div><div style="position:absolute;left:0px;top:226px;width:1000px;height:22px;background:#fff;"></div><div style="position:absolute;left:0px;top:247px;width:1000px;height:1px;border-top:1px dashed #b9b9be;"></div><div style="position:absolute;left:89px;top:226px;width:1px;height:22px;border-left:1px dashed #b9b9be;"></div><div style="position:absolute;left:179px;top:226px;width:1px;height:22px;border-left:1px dashed #b9b9be;"></div><div style="position:absolute;left:269px;top:226px;width:1px;height:22px;background:#bdbdc4;"></div><div style="position:absolute;left:359px;top:226px;width:1px;height:22px;border-left:1px dashed #b9b9be;"></div><div style="position:absolute;left:449px;top:226px;width:1px;height:22px;border-left:1px dashed #b9b9be;"></div><div style="position:absolute;left:539px;top:226px;width:1px;height:22px;background:#bdbdc4;"></div><div style="position:absolute;left:629px;top:226px;width:1px;height:22px;border-left:1px dashed #b9b9be;"></div><div style="position:absolute;left:719px;top:226px;width:1px;height:22px;border-left:1px dashed #b9b9be;"></div><div style="position:absolute;left:809px;top:226px;width:1px;height:22px;background:#bdbdc4;"></div><div style="position:absolute;left:0px;top:248px;width:1000px;height:22px;background:#fff;"></div><div style="position:absolute;left:0px;top:269px;width:1000px;height:1px;border-top:1px dashed #b9b9be;"></div><div style="position:absolute;left:89px;top:248px;width:1px;height:22px;border-left:1px dashed #b9b9be;"></div><div style="position:absolute;left:179px;top:248px;width:1px;height:22px;border-left:1px dashed #b9b9be;"></div><div style="position:absolute;left:269px;top:248px;width:1px;height:22px;background:#bdbdc4;"></div><div style="position:absolute;left:359px;top:248px;width:1px;height:22px;border-left:1px dashed #b9b9be;"></div><div style="position:absolute;left:449px;top:248px;width:1px;height:22px;border-left:1px dashed #b9b9be;"></div><div style="position:absolute;left:539px;top:248px;width:1px;height:22px;background:#bdbdc4;"></div><div style="position:absolute;left:629px;top:248px;width:1px;height:22px;border-left:1px dashed #b9b9be;"></div><div style="position:absolute;left:719px;top:248px;width:1px;height:22px;border-left:1px dashed #b9b9be;"></div><div style="position:absolute;left:809px;top:248px;width:1px;height:22px;background:#bdbdc4;"></div><div style="position:absolute;left:0px;top:270px;width:1000px;height:22px;background:#fff;"></div><div style="position:absolute;left:0px;top:291px;width:1000px;height:1px;border-top:1px dashed #b9b9be;"></div><div style="position:absolute;left:89px;top:270px;width:1px;height:22px;border-left:1px dashed #b9b9be;"></div><div style="position:absolute;left:179px;top:270px;width:1px;height:22px;border-left:1px dashed #b9b9be;"></div><div style="position:absolute;left:269px;top:270px;width:1px;height:22px;background:#bdbdc4;"></div><div style="position:absolute;left:359px;top:270px;width:1px;height:22px;border-left:1px dashed #b9b9be;"></div><div style="position:absolute;left:449px;top:270px;width:1px;height:22px;border-left:1px dashed #b9b9be;"></div><div style="position:absolute;left:539px;top:270px;width:1px;height:22px;background:#bdbdc4;"></div><div style="position:absolute;left:629px;top:270px;width:1px;height:22px;border-left:1px dashed #b9b9be;"></div><div style="position:absolute;left:719px;top:270px;width:1px;height:22px;border-left:1px dashed #b9b9be;"></div><div style="position:absolute;left:809px;top:270px;width:1px;height:22px;background:#bdbdc4;"></div><div style="position:absolute;left:0px;top:292px;width:1000px;height:22px;background:#fff;"></div><div style="position:absolute;left:0px;top:313px;width:1000px;height:1px;border-top:1px dashed #b9b9be;"></div><div style="position:absolute;left:89px;top:292px;width:1px;height:22px;border-left:1px dashed #b9b9be;"></div><div style="position:absolute;left:179px;top:292px;width:1px;height:22px;border-left:1px dashed #b9b9be;"></div><div style="position:absolute;left:269px;top:292px;width:1px;height:22px;background:#bdbdc4;"></div><div style="position:absolute;left:359px;top:292px;width:1px;height:22px;border-left:1px dashed #b9b9be;"></div><div style="position:absolute;left:449px;top:292px;width:1px;height:22px;border-left:1px dashed #b9b9be;"></div><div style="position:absolute;left:539px;top:292px;width:1px;height:22px;background:#bdbdc4;"></div><div style="position:absolute;left:629px;top:292px;width:1px;height:22px;border-left:1px dashed #b9b9be;"></div><div style="position:absolute;left:719px;top:292px;width:1px;height:22px;border-left:1px dashed #b9b9be;"></div><div style="position:absolute;left:809px;top:292px;width:1px;height:22px;background:#bdbdc4;"></div><div style="position:absolute;left:0px;top:314px;width:1000px;height:22px;background:#fff;"></div><div style="position:absolute;left:0px;top:335px;width:1000px;height:1px;border-top:1px dashed #b9b9be;"></div><div style="position:absolute;left:89px;top:314px;width:1px;height:22px;border-left:1px dashed #b9b9be;"></div><div style="position:absolute;left:179px;top:314px;width:1px;height:22px;border-left:1px dashed #b9b9be;"></div><div style="position:absolute;left:269px;top:314px;width:1px;height:22px;background:#bdbdc4;"></div><div style="position:absolute;left:359px;top:314px;width:1px;height:22px;border-left:1px dashed #b9b9be;"></div><div style="position:absolute;left:449px;top:314px;width:1px;height:22px;border-left:1px dashed #b9b9be;"></div><div style="position:absolute;left:539px;top:314px;width:1px;height:22px;background:#bdbdc4;"></div><div style="position:absolute;left:629px;top:314px;width:1px;height:22px;border-left:1px dashed #b9b9be;"></div><div style="position:absolute;left:719px;top:314px;width:1px;height:22px;border-left:1px dashed #b9b9be;"></div><div style="position:absolute;left:809px;top:314px;width:1px;height:22px;background:#bdbdc4;"></div><div style="position:absolute;left:0px;top:336px;width:1000px;height:22px;background:#2869bb;"></div><div style="position:absolute;left:0px;top:358px;width:1000px;height:22px;background:#fff;"></div><div style="position:absolute;left:0px;top:379px;width:1000px;height:1px;border-top:1px dashed #b9b9be;"></div><div style="position:absolute;left:89px;top:358px;width:1px;height:22px;border-left:1px dashed #b9b9be;"></div><div style="position:absolute;left:179px;top:358px;width:1px;height:22px;border-left:1px dashed #b9b9be;"></div><div style="position:absolute;left:269px;top:358px;width:1px;height:22px;background:#bdbdc4;"></div><div style="position:absolute;left:359px;top:358px;width:1px;height:22px;border-left:1px dashed #b9b9be;"></div><div style="position:absolute;left:449px;top:358px;width:1px;height:22px;border-left:1px dashed #b9b9be;"></div><div style="position:absolute;left:539px;top:358px;width:1px;height:22px;background:#bdbdc4;"></div><div style="position:absolute;left:629px;top:358px;width:1px;height:22px;border-left:1px dashed #b9b9be;"></div><div style="position:absolute;left:719px;top:358px;width:1px;height:22px;border-left:1px dashed #b9b9be;"></div><div style="position:absolute;left:809px;top:358px;width:1px;height:22px;background:#bdbdc4;"></div><div style="position:absolute;left:0px;top:380px;width:1000px;height:22px;background:#fff;"></div><div style="position:absolute;left:0px;top:401px;width:1000px;height:1px;border-top:1px dashed #b9b9be;"></div><div style="position:absolute;left:89px;top:380px;width:1px;height:22px;border-left:1px dashed #b9b9be;"></div><div style="position:absolute;left:179px;top:380px;width:1px;height:22px;border-left:1px dashed #b9b9be;"></div><div style="position:absolute;left:269px;top:380px;width:1px;height:22px;background:#bdbdc4;"></div><div style="position:absolute;left:359px;top:380px;width:1px;height:22px;border-left:1px dashed #b9b9be;"></div><div style="position:absolute;left:449px;top:380px;width:1px;height:22px;border-left:1px dashed #b9b9be;"></div><div style="position:absolute;left:539px;top:380px;width:1px;height:22px;background:#bdbdc4;"></div><div style="position:absolute;left:629px;top:380px;width:1px;height:22px;border-left:1px dashed #b9b9be;"></div><div style="position:absolute;left:719px;top:380px;width:1px;height:22px;border-left:1px dashed #b9b9be;"></div><div style="position:absolute;left:809px;top:380px;width:1px;height:22px;background:#bdbdc4;"></div><div style="position:absolute;left:0px;top:402px;width:1000px;height:22px;background:#fff;"></div><div style="position:absolute;left:0px;top:423px;width:1000px;height:1px;border-top:1px dashed #b9b9be;"></div><div style="position:absolute;left:89px;top:402px;width:1px;height:22px;border-left:1px dashed #b9b9be;"></div><div style="position:absolute;left:179px;top:402px;width:1px;height:22px;border-left:1px dashed #b9b9be;"></div><div style="position:absolute;left:269px;top:402px;width:1px;height:22px;background:#bdbdc4;"></div><div style="position:absolute;left:359px;top:402px;width:1px;height:22px;border-left:1px dashed #b9b9be;"></div><div style="position:absolute;left:449px;top:402px;width:1px;height:22px;border-left:1px dashed #b9b9be;"></div><div style="position:absolute;left:539px;top:402px;width:1px;height:22px;background:#bdbdc4;"></div><div style="position:absolute;left:629px;top:402px;width:1px;height:22px;border-left:1px dashed #b9b9be;"></div><div style="position:absolute;left:719px;top:402px;width:1px;height:22px;border-left:1px dashed #b9b9be;"></div><div style="position:absolute;left:809px;top:402px;width:1px;height:22px;background:#bdbdc4;"></div><div style="position:absolute;left:0px;top:424px;width:1000px;height:22px;background:#2869bb;"></div><div class="t" style="left:-256px;width:600px;text-align:center;top:138.0px;line-height:25.0px;font-size:12.5px;color:#1e1e1e;font-weight:400;">750</div><div class="t" style="left:-166px;width:600px;text-align:center;top:138.0px;line-height:25.0px;font-size:12.5px;color:#1e1e1e;font-weight:400;">750</div><div class="t" style="left:-76px;width:600px;text-align:center;top:138.0px;line-height:25.0px;font-size:12.5px;color:#27a844;font-weight:400;">750</div><div class="t" style="left:14px;width:600px;text-align:center;top:138.0px;line-height:25.0px;font-size:12.5px;color:#1e1e1e;font-weight:400;">750</div><div style="position:absolute;left:759px;top:0px;width:241px;height:51px;background:#fff;"></div><div style="position:absolute;left:759px;top:0px;width:1px;height:50px;background:#bdbdc4;"></div><div style="position:absolute;left:759px;top:24px;width:241px;height:1px;background:#bdbdc4;"></div><div style="position:absolute;left:759px;top:49px;width:241px;height:1px;background:#bdbdc4;"></div><div class="t" style="left:579.5px;width:600px;text-align:center;top:1px;line-height:24px;font-size:12px;color:#1e1e1e;font-weight:400;">Суммарно</div><div class="t" style="left:499px;width:600px;text-align:center;top:26px;line-height:24px;font-size:12px;color:#1e1e1e;font-weight:400;">Согл.план</div><div class="t" style="left:579.5px;width:600px;text-align:center;top:26px;line-height:24px;font-size:12px;color:#1e1e1e;font-weight:400;">Опер.план</div><div class="t" style="left:658px;width:600px;text-align:center;top:26px;line-height:24px;font-size:12px;color:#1e1e1e;font-weight:400;">Факт</div><div style="position:absolute;left:839px;top:25px;width:1px;height:25px;border-left:1px dashed #b9b9be;"></div><div style="position:absolute;left:919px;top:25px;width:1px;height:25px;border-left:1px dashed #b9b9be;"></div><div style="position:absolute;left:997px;top:25px;width:1px;height:25px;background:#bdbdc4;"></div><div style="position:absolute;left:759px;top:50px;width:241px;height:22px;background:#173862;"></div><div style="position:absolute;left:759px;top:50px;width:1px;height:22px;background:#b9bcc6;"></div><div style="position:absolute;left:759px;top:72px;width:241px;height:22px;background:#1c4a82;"></div><div style="position:absolute;left:759px;top:72px;width:1px;height:22px;background:#b9bcc6;"></div><div style="position:absolute;left:759px;top:94px;width:241px;height:22px;background:#215a9e;"></div><div style="position:absolute;left:759px;top:94px;width:1px;height:22px;background:#b9bcc6;"></div><div style="position:absolute;left:759px;top:116px;width:241px;height:22px;background:#f4f4f6;"></div><div style="position:absolute;left:759px;top:116px;width:1px;height:22px;background:#bdbdc4;"></div><div style="position:absolute;left:759px;top:137px;width:241px;height:1px;border-top:1px dashed #b9b9be;"></div><div style="position:absolute;left:839px;top:116px;width:1px;height:22px;border-left:1px dashed #b9b9be;"></div><div style="position:absolute;left:919px;top:116px;width:1px;height:22px;border-left:1px dashed #b9b9be;"></div><div style="position:absolute;left:999px;top:116px;width:1px;height:22px;border-left:1px dashed #b9b9be;"></div><div class="t" style="left:499px;width:600px;text-align:center;top:115.5px;line-height:25.0px;font-size:12.5px;color:#1e1e1e;font-weight:400;">602</div><div class="t" style="left:579px;width:600px;text-align:center;top:115.5px;line-height:25.0px;font-size:12.5px;color:#1e1e1e;font-weight:400;">602</div><div class="t" style="left:659px;width:600px;text-align:center;top:115.5px;line-height:25.0px;font-size:12.5px;color:#1e1e1e;font-weight:400;">602</div><div style="position:absolute;left:759px;top:138px;width:241px;height:22px;background:#fffbd3;"></div><div style="position:absolute;left:759px;top:138px;width:1px;height:22px;background:#bdbdc4;"></div><div style="position:absolute;left:759px;top:159px;width:241px;height:1px;border-top:1px dashed #b9b9be;"></div><div style="position:absolute;left:839px;top:138px;width:1px;height:22px;border-left:1px dashed #b9b9be;"></div><div style="position:absolute;left:919px;top:138px;width:1px;height:22px;border-left:1px dashed #b9b9be;"></div><div style="position:absolute;left:999px;top:138px;width:1px;height:22px;border-left:1px dashed #b9b9be;"></div><div class="t" style="left:499px;width:600px;text-align:center;top:137.5px;line-height:25.0px;font-size:12.5px;color:#1e1e1e;font-weight:400;">1 500</div><div class="t" style="left:579px;width:600px;text-align:center;top:137.5px;line-height:25.0px;font-size:12.5px;color:#1e1e1e;font-weight:400;">1 500</div><div class="t" style="left:659px;width:600px;text-align:center;top:137.5px;line-height:25.0px;font-size:12.5px;color:#1e1e1e;font-weight:400;">1 500</div><div style="position:absolute;left:759px;top:160px;width:241px;height:22px;background:#f4f4f6;"></div><div style="position:absolute;left:759px;top:160px;width:1px;height:22px;background:#bdbdc4;"></div><div style="position:absolute;left:759px;top:181px;width:241px;height:1px;border-top:1px dashed #b9b9be;"></div><div style="position:absolute;left:839px;top:160px;width:1px;height:22px;border-left:1px dashed #b9b9be;"></div><div style="position:absolute;left:919px;top:160px;width:1px;height:22px;border-left:1px dashed #b9b9be;"></div><div style="position:absolute;left:999px;top:160px;width:1px;height:22px;border-left:1px dashed #b9b9be;"></div><div class="t" style="left:499px;width:600px;text-align:center;top:159.5px;line-height:25.0px;font-size:12.5px;color:#1e1e1e;font-weight:400;">37</div><div class="t" style="left:579px;width:600px;text-align:center;top:159.5px;line-height:25.0px;font-size:12.5px;color:#1e1e1e;font-weight:400;">37</div><div class="t" style="left:659px;width:600px;text-align:center;top:159.5px;line-height:25.0px;font-size:12.5px;color:#1e1e1e;font-weight:400;">37</div><div style="position:absolute;left:759px;top:182px;width:241px;height:22px;background:#215a9e;"></div><div style="position:absolute;left:759px;top:182px;width:1px;height:22px;background:#b9bcc6;"></div><div style="position:absolute;left:759px;top:204px;width:241px;height:22px;background:#2869bb;"></div><div style="position:absolute;left:759px;top:204px;width:1px;height:22px;background:#b9bcc6;"></div><div style="position:absolute;left:759px;top:226px;width:241px;height:22px;background:#f4f4f6;"></div><div style="position:absolute;left:759px;top:226px;width:1px;height:22px;background:#bdbdc4;"></div><div style="position:absolute;left:759px;top:247px;width:241px;height:1px;border-top:1px dashed #b9b9be;"></div><div style="position:absolute;left:839px;top:226px;width:1px;height:22px;border-left:1px dashed #b9b9be;"></div><div style="position:absolute;left:919px;top:226px;width:1px;height:22px;border-left:1px dashed #b9b9be;"></div><div style="position:absolute;left:999px;top:226px;width:1px;height:22px;border-left:1px dashed #b9b9be;"></div><div class="t" style="left:499px;width:600px;text-align:center;top:225.5px;line-height:25.0px;font-size:12.5px;color:#1e1e1e;font-weight:400;">4</div><div class="t" style="left:579px;width:600px;text-align:center;top:225.5px;line-height:25.0px;font-size:12.5px;color:#1e1e1e;font-weight:400;">4</div><div class="t" style="left:659px;width:600px;text-align:center;top:225.5px;line-height:25.0px;font-size:12.5px;color:#1e1e1e;font-weight:400;">4</div><div style="position:absolute;left:759px;top:248px;width:241px;height:22px;background:#f4f4f6;"></div><div style="position:absolute;left:759px;top:248px;width:1px;height:22px;background:#bdbdc4;"></div><div style="position:absolute;left:759px;top:269px;width:241px;height:1px;border-top:1px dashed #b9b9be;"></div><div style="position:absolute;left:839px;top:248px;width:1px;height:22px;border-left:1px dashed #b9b9be;"></div><div style="position:absolute;left:919px;top:248px;width:1px;height:22px;border-left:1px dashed #b9b9be;"></div><div style="position:absolute;left:999px;top:248px;width:1px;height:22px;border-left:1px dashed #b9b9be;"></div><div class="t" style="left:499px;width:600px;text-align:center;top:247.5px;line-height:25.0px;font-size:12.5px;color:#1e1e1e;font-weight:400;">4</div><div class="t" style="left:579px;width:600px;text-align:center;top:247.5px;line-height:25.0px;font-size:12.5px;color:#1e1e1e;font-weight:400;">4</div><div class="t" style="left:659px;width:600px;text-align:center;top:247.5px;line-height:25.0px;font-size:12.5px;color:#1e1e1e;font-weight:400;">4</div><div style="position:absolute;left:759px;top:270px;width:241px;height:22px;background:#f4f4f6;"></div><div style="position:absolute;left:759px;top:270px;width:1px;height:22px;background:#bdbdc4;"></div><div style="position:absolute;left:759px;top:291px;width:241px;height:1px;border-top:1px dashed #b9b9be;"></div><div style="position:absolute;left:839px;top:270px;width:1px;height:22px;border-left:1px dashed #b9b9be;"></div><div style="position:absolute;left:919px;top:270px;width:1px;height:22px;border-left:1px dashed #b9b9be;"></div><div style="position:absolute;left:999px;top:270px;width:1px;height:22px;border-left:1px dashed #b9b9be;"></div><div class="t" style="left:499px;width:600px;text-align:center;top:269.5px;line-height:25.0px;font-size:12.5px;color:#1e1e1e;font-weight:400;">4</div><div class="t" style="left:579px;width:600px;text-align:center;top:269.5px;line-height:25.0px;font-size:12.5px;color:#1e1e1e;font-weight:400;">4</div><div class="t" style="left:659px;width:600px;text-align:center;top:269.5px;line-height:25.0px;font-size:12.5px;color:#1e1e1e;font-weight:400;">4</div><div style="position:absolute;left:759px;top:292px;width:241px;height:22px;background:#f4f4f6;"></div><div style="position:absolute;left:759px;top:292px;width:1px;height:22px;background:#bdbdc4;"></div><div style="position:absolute;left:759px;top:313px;width:241px;height:1px;border-top:1px dashed #b9b9be;"></div><div style="position:absolute;left:839px;top:292px;width:1px;height:22px;border-left:1px dashed #b9b9be;"></div><div style="position:absolute;left:919px;top:292px;width:1px;height:22px;border-left:1px dashed #b9b9be;"></div><div style="position:absolute;left:999px;top:292px;width:1px;height:22px;border-left:1px dashed #b9b9be;"></div><div class="t" style="left:499px;width:600px;text-align:center;top:291.5px;line-height:25.0px;font-size:12.5px;color:#1e1e1e;font-weight:400;">4</div><div class="t" style="left:579px;width:600px;text-align:center;top:291.5px;line-height:25.0px;font-size:12.5px;color:#1e1e1e;font-weight:400;">4</div><div class="t" style="left:659px;width:600px;text-align:center;top:291.5px;line-height:25.0px;font-size:12.5px;color:#1e1e1e;font-weight:400;">4</div><div style="position:absolute;left:759px;top:314px;width:241px;height:22px;background:#f4f4f6;"></div><div style="position:absolute;left:759px;top:314px;width:1px;height:22px;background:#bdbdc4;"></div><div style="position:absolute;left:759px;top:335px;width:241px;height:1px;border-top:1px dashed #b9b9be;"></div><div style="position:absolute;left:839px;top:314px;width:1px;height:22px;border-left:1px dashed #b9b9be;"></div><div style="position:absolute;left:919px;top:314px;width:1px;height:22px;border-left:1px dashed #b9b9be;"></div><div style="position:absolute;left:999px;top:314px;width:1px;height:22px;border-left:1px dashed #b9b9be;"></div><div class="t" style="left:499px;width:600px;text-align:center;top:313.5px;line-height:25.0px;font-size:12.5px;color:#1e1e1e;font-weight:400;">55</div><div class="t" style="left:579px;width:600px;text-align:center;top:313.5px;line-height:25.0px;font-size:12.5px;color:#1e1e1e;font-weight:400;">55</div><div class="t" style="left:659px;width:600px;text-align:center;top:313.5px;line-height:25.0px;font-size:12.5px;color:#1e1e1e;font-weight:400;">55</div><div style="position:absolute;left:759px;top:336px;width:241px;height:22px;background:#2869bb;"></div><div style="position:absolute;left:759px;top:336px;width:1px;height:22px;background:#b9bcc6;"></div><div style="position:absolute;left:759px;top:358px;width:241px;height:22px;background:#f4f4f6;"></div><div style="position:absolute;left:759px;top:358px;width:1px;height:22px;background:#bdbdc4;"></div><div style="position:absolute;left:759px;top:379px;width:241px;height:1px;border-top:1px dashed #b9b9be;"></div><div style="position:absolute;left:839px;top:358px;width:1px;height:22px;border-left:1px dashed #b9b9be;"></div><div style="position:absolute;left:919px;top:358px;width:1px;height:22px;border-left:1px dashed #b9b9be;"></div><div style="position:absolute;left:999px;top:358px;width:1px;height:22px;border-left:1px dashed #b9b9be;"></div><div class="t" style="left:499px;width:600px;text-align:center;top:357.5px;line-height:25.0px;font-size:12.5px;color:#1e1e1e;font-weight:400;">28</div><div class="t" style="left:579px;width:600px;text-align:center;top:357.5px;line-height:25.0px;font-size:12.5px;color:#1e1e1e;font-weight:400;">28</div><div class="t" style="left:659px;width:600px;text-align:center;top:357.5px;line-height:25.0px;font-size:12.5px;color:#1e1e1e;font-weight:400;">28</div><div style="position:absolute;left:759px;top:380px;width:241px;height:22px;background:#f4f4f6;"></div><div style="position:absolute;left:759px;top:380px;width:1px;height:22px;background:#bdbdc4;"></div><div style="position:absolute;left:759px;top:401px;width:241px;height:1px;border-top:1px dashed #b9b9be;"></div><div style="position:absolute;left:839px;top:380px;width:1px;height:22px;border-left:1px dashed #b9b9be;"></div><div style="position:absolute;left:919px;top:380px;width:1px;height:22px;border-left:1px dashed #b9b9be;"></div><div style="position:absolute;left:999px;top:380px;width:1px;height:22px;border-left:1px dashed #b9b9be;"></div><div class="t" style="left:499px;width:600px;text-align:center;top:379.5px;line-height:25.0px;font-size:12.5px;color:#1e1e1e;font-weight:400;">30.7</div><div class="t" style="left:579px;width:600px;text-align:center;top:379.5px;line-height:25.0px;font-size:12.5px;color:#1e1e1e;font-weight:400;">30.7</div><div class="t" style="left:659px;width:600px;text-align:center;top:379.5px;line-height:25.0px;font-size:12.5px;color:#1e1e1e;font-weight:400;">30.7</div><div style="position:absolute;left:759px;top:402px;width:241px;height:22px;background:#f4f4f6;"></div><div style="position:absolute;left:759px;top:402px;width:1px;height:22px;background:#bdbdc4;"></div><div style="position:absolute;left:759px;top:423px;width:241px;height:1px;border-top:1px dashed #b9b9be;"></div><div style="position:absolute;left:839px;top:402px;width:1px;height:22px;border-left:1px dashed #b9b9be;"></div><div style="position:absolute;left:919px;top:402px;width:1px;height:22px;border-left:1px dashed #b9b9be;"></div><div style="position:absolute;left:999px;top:402px;width:1px;height:22px;border-left:1px dashed #b9b9be;"></div><div class="t" style="left:499px;width:600px;text-align:center;top:401.5px;line-height:25.0px;font-size:12.5px;color:#1e1e1e;font-weight:400;">2.75</div><div class="t" style="left:579px;width:600px;text-align:center;top:401.5px;line-height:25.0px;font-size:12.5px;color:#1e1e1e;font-weight:400;">2.75</div><div class="t" style="left:659px;width:600px;text-align:center;top:401.5px;line-height:25.0px;font-size:12.5px;color:#1e1e1e;font-weight:400;">2.75</div><div style="position:absolute;left:759px;top:424px;width:241px;height:22px;background:#2869bb;"></div><div style="position:absolute;left:759px;top:424px;width:1px;height:22px;background:#b9bcc6;"></div></div><div style="position:absolute;left:1914px;top:89px;width:3px;height:438px;background:#f3f3f5;"></div><div style="position:absolute;left:1914px;top:90px;width:3px;height:40px;background:#dcdcdf;border-radius:2px;"></div><div style="position:absolute;left:914px;top:514px;width:1003px;height:13px;background:#f3f3f5;"></div><div style="position:absolute;left:914px;top:521px;width:1003px;height:6px;background:#d9d9dc;"></div><div style="position:absolute;left:1186.5px;top:515px;width:18.5px;height:8px;background:#dadadd;border-radius:4px;"></div><div style="position:absolute;left:43px;top:527px;width:1874px;height:6px;background:#b4b4ba;"></div><div class="t" style="left:-140.5px;width:600px;text-align:center;top:538.1px;line-height:34.8px;font-size:17.4px;color:#333;font-weight:400;">Карточка работы</div><div class="t" style="left:78.5px;width:600px;text-align:center;top:538.1px;line-height:34.8px;font-size:17.4px;color:#333;font-weight:400;">Связи работы</div><div class="t" style="left:309.5px;width:600px;text-align:center;top:538.1px;line-height:34.8px;font-size:17.4px;color:#333;font-weight:400;">Связанные графики</div><div class="t" style="left:538.5px;width:600px;text-align:center;top:538.1px;line-height:34.8px;font-size:17.4px;color:#1b74d3;font-weight:400;">Справочники</div><div class="t" style="left:785px;width:600px;text-align:center;top:538.1px;line-height:34.8px;font-size:17.4px;color:#333;font-weight:400;">Суточное планирование</div><div class="t" style="left:1065px;width:600px;text-align:center;top:538.1px;line-height:34.8px;font-size:17.4px;color:#333;font-weight:400;">Фото / Документация</div><div class="t" style="left:1334.5px;width:600px;text-align:center;top:538.1px;line-height:34.8px;font-size:17.4px;color:#333;font-weight:400;">Запросы и поручения</div><div class="t" style="left:1544.5px;width:600px;text-align:center;top:538.1px;line-height:34.8px;font-size:17.4px;color:#333;font-weight:400;">Табели</div><div style="position:absolute;left:738px;top:574.7px;width:202px;height:2px;background:#1b74d3;"></div><div style="position:absolute;left:934px;top:585px;width:1px;height:323px;background:#bdbdc4;"></div><div style="position:absolute;left:55px;top:593px;width:227px;height:40px;background:#fff;border:1px solid #bdbdc4;border-radius:4px;"></div><div class="t" style="left:67px;top:592.7px;line-height:22.6px;font-size:11.3px;color:#666;font-weight:400;">Справочник</div><div class="t" style="left:67px;top:603.6px;line-height:30.8px;font-size:15.4px;color:#1e1e1e;font-weight:400;">Комплексный ресурс</div><div style="position:absolute;left:302px;top:597px;width:149px;height:32px;background:#1b74d3;border-radius:4px;box-shadow:0 1px 3px rgba(0,0,0,0.3);"></div><div class="t" style="left:76.5px;width:600px;text-align:center;top:598px;line-height:30px;font-size:15px;color:#fff;font-weight:400;">Назначить запись</div><div style="position:absolute;left:455.5px;top:597px;width:39.5px;height:32px;background:#1b74d3;border-radius:4px;box-shadow:0 1px 3px rgba(0,0,0,0.3);"></div><div style="position:absolute;left:704px;top:604px;width:17px;height:17px;border:2px solid #555;border-radius:2px;"></div><div class="t" style="left:730px;top:598.5px;line-height:30px;font-size:15px;color:#1e1e1e;font-weight:400;">Только системные атрибуты</div><div style="position:absolute;left:43px;top:641px;width:891px;height:56px;background:#f0f0f3;"></div><div style="position:absolute;left:43px;top:696px;width:891px;height:1px;background:#bdbdc4;"></div><div style="position:absolute;left:43px;top:724px;width:891px;height:1px;background:#bdbdc4;"></div><div style="position:absolute;left:107px;top:668px;width:827px;height:1px;background:#bdbdc4;"></div><div style="position:absolute;left:107px;top:641px;width:1px;height:84px;background:#bdbdc4;"></div><div style="position:absolute;left:675px;top:641px;width:1px;height:84px;background:#bdbdc4;"></div><div style="position:absolute;left:181px;top:668px;width:1px;height:57px;background:#bdbdc4;"></div><div style="position:absolute;left:326px;top:668px;width:1px;height:57px;background:#bdbdc4;"></div><div style="position:absolute;left:405px;top:668px;width:1px;height:57px;background:#bdbdc4;"></div><div style="position:absolute;left:538px;top:668px;width:1px;height:57px;background:#bdbdc4;"></div><div style="position:absolute;left:810px;top:668px;width:1px;height:57px;background:#bdbdc4;"></div><div style="position:absolute;left:866px;top:668px;width:1px;height:57px;background:#bdbdc4;"></div><div class="t" style="left:91px;width:600px;text-align:center;top:641.3px;line-height:27.4px;font-size:13.7px;color:#1e1e1e;font-weight:400;">Атрибуты справочника</div><div class="t" style="left:504.5px;width:600px;text-align:center;top:641.3px;line-height:27.4px;font-size:13.7px;color:#1e1e1e;font-weight:400;">Атрибуты назначения</div><div class="t" style="left:-152px;width:600px;text-align:center;top:669.7px;line-height:25.6px;font-size:12.8px;color:#1e1e1e;font-weight:400;">Шифр</div><div class="t" style="left:-46.5px;width:600px;text-align:center;top:669.7px;line-height:25.6px;font-size:12.8px;color:#1e1e1e;font-weight:400;">Наименование</div><div class="t" style="left:65.5px;width:600px;text-align:center;top:669.7px;line-height:25.6px;font-size:12.8px;color:#1e1e1e;font-weight:400;">Ед. изм.</div><div class="t" style="left:171.5px;width:600px;text-align:center;top:669.7px;line-height:25.6px;font-size:12.8px;color:#1e1e1e;font-weight:400;">Интенсивность</div><div class="t" style="left:306.5px;width:600px;text-align:center;top:669.7px;line-height:25.6px;font-size:12.8px;color:#1e1e1e;font-weight:400;">Тип ресурса</div><div class="t" style="left:442.5px;width:600px;text-align:center;top:669.7px;line-height:25.6px;font-size:12.8px;color:#1e1e1e;font-weight:400;">Распределение</div><div class="t" style="left:538px;width:600px;text-align:center;top:669.7px;line-height:25.6px;font-size:12.8px;color:#1e1e1e;font-weight:400;">Факт</div><div class="t" style="left:600px;width:600px;text-align:center;top:669.7px;line-height:25.6px;font-size:12.8px;color:#1e1e1e;font-weight:400;">План</div><div class="t" style="left:-221px;width:600px;text-align:center;top:696.8px;line-height:27.4px;font-size:13.7px;color:#1e1e1e;font-weight:400;">1</div><div class="t" style="left:116px;top:695.8px;line-height:27.4px;font-size:13.7px;color:#1e1e1e;font-weight:400;">R100</div><div class="t" style="left:190px;top:695.8px;line-height:27.4px;font-size:13.7px;color:#1e1e1e;font-weight:400;">Бетонная смесь</div><div class="t" style="left:335px;top:695.8px;line-height:27.4px;font-size:13.7px;color:#1e1e1e;font-weight:400;">м3</div><div class="t" style="left:546.5px;top:695.8px;line-height:27.4px;font-size:13.7px;color:#1e1e1e;font-weight:400;">Материальный</div><div class="t" style="left:684px;top:695.8px;line-height:27.4px;font-size:13.7px;color:#1e1e1e;font-weight:400;">E</div><div class="t" style="left:819px;top:695.8px;line-height:27.4px;font-size:13.7px;color:#1e1e1e;font-weight:400;">100</div><div class="t" style="left:875px;top:695.8px;line-height:27.4px;font-size:13.7px;color:#1e1e1e;font-weight:400;">100</div><div style="position:absolute;left:939px;top:593px;width:196px;height:40px;background:#fff;border:1px solid #bdbdc4;border-radius:4px;"></div><div class="t" style="left:951px;top:598px;line-height:30px;font-size:15px;color:#1e1e1e;font-weight:400;">Зависимые ресурсы</div><div style="position:absolute;left:1698px;top:604px;width:17.5px;height:17.5px;border:2px solid #555;border-radius:2px;"></div><div class="t" style="left:1724px;top:598.5px;line-height:30px;font-size:15px;color:#1e1e1e;font-weight:400;">Только системные атрибуты</div><div style="position:absolute;left:935px;top:641px;width:982px;height:56px;background:#f0f0f3;"></div><div style="position:absolute;left:935px;top:696px;width:982px;height:1px;background:#bdbdc4;"></div><div style="position:absolute;left:935px;top:724px;width:982px;height:1px;background:#bdbdc4;"></div><div style="position:absolute;left:935px;top:752px;width:982px;height:1px;background:#bdbdc4;"></div><div style="position:absolute;left:1253px;top:668px;width:664px;height:1px;background:#bdbdc4;"></div><div style="position:absolute;left:999px;top:641px;width:1px;height:112px;background:#bdbdc4;"></div><div style="position:absolute;left:1153px;top:641px;width:1px;height:112px;background:#bdbdc4;"></div><div style="position:absolute;left:1253px;top:641px;width:1px;height:112px;background:#bdbdc4;"></div><div style="position:absolute;left:1707px;top:641px;width:1px;height:112px;background:#bdbdc4;"></div><div style="position:absolute;left:1314px;top:668px;width:1px;height:85px;background:#bdbdc4;"></div><div style="position:absolute;left:1419px;top:668px;width:1px;height:85px;background:#bdbdc4;"></div><div style="position:absolute;left:1484px;top:668px;width:1px;height:85px;background:#bdbdc4;"></div><div style="position:absolute;left:1593px;top:668px;width:1px;height:85px;background:#bdbdc4;"></div><div style="position:absolute;left:1817px;top:668px;width:1px;height:85px;background:#bdbdc4;"></div><div style="position:absolute;left:1864px;top:668px;width:1px;height:85px;background:#bdbdc4;"></div><div class="t" style="left:776px;width:600px;text-align:center;top:656.2px;line-height:25.6px;font-size:12.8px;color:#1e1e1e;font-weight:400;">Входит в комплексный</div><div class="t" style="left:903px;width:600px;text-align:center;top:656.2px;line-height:25.6px;font-size:12.8px;color:#1e1e1e;font-weight:400;">Коэффициент</div><div class="t" style="left:1180px;width:600px;text-align:center;top:641.3px;line-height:27.4px;font-size:13.7px;color:#1e1e1e;font-weight:400;">Атрибуты справочника</div><div class="t" style="left:1510px;width:600px;text-align:center;top:641.3px;line-height:27.4px;font-size:13.7px;color:#1e1e1e;font-weight:400;">Атрибуты назначения</div><div class="t" style="left:987px;width:600px;text-align:center;top:669.7px;line-height:25.6px;font-size:12.8px;color:#1e1e1e;font-weight:400;">Шифр</div><div class="t" style="left:1066.5px;width:600px;text-align:center;top:669.7px;line-height:25.6px;font-size:12.8px;color:#1e1e1e;font-weight:400;">Наименование</div><div class="t" style="left:1151.5px;width:600px;text-align:center;top:669.7px;line-height:25.6px;font-size:12.8px;color:#1e1e1e;font-weight:400;">Ед. изм.</div><div class="t" style="left:1238.5px;width:600px;text-align:center;top:669.7px;line-height:25.6px;font-size:12.8px;color:#1e1e1e;font-weight:400;">Интенсивность</div><div class="t" style="left:1350px;width:600px;text-align:center;top:669.7px;line-height:25.6px;font-size:12.8px;color:#1e1e1e;font-weight:400;">Тип ресурса</div><div class="t" style="left:1462px;width:600px;text-align:center;top:669.7px;line-height:25.6px;font-size:12.8px;color:#1e1e1e;font-weight:400;">Распределение</div><div class="t" style="left:1541px;width:600px;text-align:center;top:669.7px;line-height:25.6px;font-size:12.8px;color:#1e1e1e;font-weight:400;">Факт</div><div class="t" style="left:1589px;width:600px;text-align:center;top:669.7px;line-height:25.6px;font-size:12.8px;color:#1e1e1e;font-weight:400;">План</div><div class="t" style="left:670.5px;width:600px;text-align:center;top:697.3px;line-height:27.4px;font-size:13.7px;color:#1e1e1e;font-weight:400;">1</div><div class="t" style="left:776px;width:600px;text-align:center;top:697.3px;line-height:27.4px;font-size:13.7px;color:#1e1e1e;font-weight:400;">Бетонная смесь</div><div class="t" style="left:903px;width:600px;text-align:center;top:697.3px;line-height:27.4px;font-size:13.7px;color:#1e1e1e;font-weight:400;">0.8</div><div class="t" style="left:1262px;top:695.8px;line-height:27.4px;font-size:13.7px;color:#1e1e1e;font-weight:400;">R100</div><div class="t" style="left:1322px;top:695.8px;line-height:27.4px;font-size:13.7px;color:#1e1e1e;font-weight:400;">Цемент</div><div class="t" style="left:1428px;top:695.8px;line-height:27.4px;font-size:13.7px;color:#1e1e1e;font-weight:400;">м3</div><div class="t" style="left:1493px;top:695.8px;line-height:27.4px;font-size:13.7px;color:#1e1e1e;font-weight:400;">30</div><div class="t" style="left:1602px;top:695.8px;line-height:27.4px;font-size:13.7px;color:#1e1e1e;font-weight:400;">Материальный</div><div class="t" style="left:1826px;top:695.8px;line-height:27.4px;font-size:13.7px;color:#1e1e1e;font-weight:400;">80</div><div class="t" style="left:1873px;top:695.8px;line-height:27.4px;font-size:13.7px;color:#1e1e1e;font-weight:400;">80</div><div class="t" style="left:670.5px;width:600px;text-align:center;top:725.3px;line-height:27.4px;font-size:13.7px;color:#1e1e1e;font-weight:400;">2</div><div class="t" style="left:776px;width:600px;text-align:center;top:725.3px;line-height:27.4px;font-size:13.7px;color:#1e1e1e;font-weight:400;">Бетонная смесь</div><div class="t" style="left:903px;width:600px;text-align:center;top:725.3px;line-height:27.4px;font-size:13.7px;color:#1e1e1e;font-weight:400;">0.9</div><div class="t" style="left:1262px;top:723.8px;line-height:27.4px;font-size:13.7px;color:#1e1e1e;font-weight:400;">R110</div><div class="t" style="left:1322px;top:723.8px;line-height:27.4px;font-size:13.7px;color:#1e1e1e;font-weight:400;">Песок</div><div class="t" style="left:1428px;top:723.8px;line-height:27.4px;font-size:13.7px;color:#1e1e1e;font-weight:400;">м3</div><div class="t" style="left:1493px;top:723.8px;line-height:27.4px;font-size:13.7px;color:#1e1e1e;font-weight:400;">20</div><div class="t" style="left:1602px;top:723.8px;line-height:27.4px;font-size:13.7px;color:#1e1e1e;font-weight:400;">Материальный</div><div class="t" style="left:1826px;top:723.8px;line-height:27.4px;font-size:13.7px;color:#1e1e1e;font-weight:400;">90</div><div class="t" style="left:1873px;top:723.8px;line-height:27.4px;font-size:13.7px;color:#1e1e1e;font-weight:400;">90</div><div style="position:absolute;left:1300px;top:46px;width:487px;height:240px;background:#f3f3f6;border-radius:5px;box-shadow:0 3px 8px rgba(0,0,0,0.22),0 0 1px rgba(0,0,0,0.2);"></div><div class="t" style="left:1356.5px;top:53.5px;line-height:30px;font-size:15px;color:#2a2a2e;font-weight:400;">Обновить индикаторы и расчетные атрибуты</div><div class="t" style="left:1356.5px;top:101.5px;line-height:30px;font-size:15px;color:#2a2a2e;font-weight:400;">Синхронизировать данные по ФО, ТР, СТ, ресурсам</div><div class="t" style="left:1356.5px;top:149.5px;line-height:30px;font-size:15px;color:#2a2a2e;font-weight:400;">Обновить плановую стоимость, ФО и ТР на дату</div><div class="t" style="left:1356.5px;top:197.5px;line-height:30px;font-size:15px;color:#2a2a2e;font-weight:400;">Обновить целевые даты</div><div class="t" style="left:1356.5px;top:245.5px;line-height:30px;font-size:15px;color:#2a2a2e;font-weight:400;">Рассчитать стоимость</div><div style="position:absolute;left:1680px;top:60px;width:28px;height:18px;background:#ebebee;border:1px solid #c8c8cc;border-radius:3px;"></div><div class="t" style="left:1394px;width:600px;text-align:center;top:57px;line-height:24px;font-size:12px;color:#333;font-weight:700;font-family:'Liberation Mono',monospace;">Alt</div><div class="t" style="left:1413.5px;width:600px;text-align:center;top:55.5px;line-height:26px;font-size:13px;color:#333;font-weight:700;">+</div><div style="position:absolute;left:1719px;top:60px;width:15px;height:18px;background:#ebebee;border:1px solid #c8c8cc;border-radius:3px;"></div><div class="t" style="left:1426.5px;width:600px;text-align:center;top:57px;line-height:24px;font-size:12px;color:#333;font-weight:700;font-family:'Liberation Mono',monospace;">I</div><div style="position:absolute;left:1751px;top:61.5px;width:16px;height:16px;background:#c4000f;border-radius:50%;"></div><div style="position:absolute;left:1751px;top:109.5px;width:16px;height:16px;background:#22b24a;border-radius:50%;"></div><svg style="position:absolute;left:1320.5px;top:57px;" width="16" height="25" viewBox="0 0 16 25" fill="none" stroke="#47474c" stroke-width="2" stroke-linecap="round" stroke-linejoin="round"><circle cx="3.5" cy="3.5" r="2.7" fill="#47474c" stroke="none"/><circle cx="3.5" cy="12.5" r="2.7" fill="#47474c" stroke="none"/><circle cx="3.5" cy="21.5" r="2.7" fill="#47474c" stroke="none"/><circle cx="12.5" cy="3.5" r="2.7" fill="#47474c" stroke="none"/><circle cx="12.5" cy="12.5" r="2.7" fill="#47474c" stroke="none"/><circle cx="12.5" cy="21.5" r="2.7" fill="#47474c" stroke="none"/></svg><svg style="position:absolute;left:1316.5px;top:104.5px;" width="24" height="24" viewBox="0 0 24 24" fill="none" stroke="#47474c" stroke-width="2" stroke-linecap="round" stroke-linejoin="round"><g transform="translate(-3.4 -3.4) scale(1.28)" stroke-width="1.6"><path d="M21 12a9 9 0 1 1-9-9c2.52 0 4.93 1 6.74 2.74L21 8"/><path d="M21 3v5h-5"/><path d="M8.5 15.5v-3M11.5 15.5v-5" stroke-width="2"/><circle cx="14.3" cy="15.3" r="1" fill="#47474c" stroke="none"/></g></svg><svg style="position:absolute;left:1316.5px;top:152.5px;" width="24" height="24" viewBox="0 0 24 24" fill="none" stroke="#47474c" stroke-width="2" stroke-linecap="round" stroke-linejoin="round"><g transform="translate(-3.4 -3.4) scale(1.28)" stroke-width="1.6"><path d="M21 12a9 9 0 1 1-9-9c2.52 0 4.93 1 6.74 2.74L21 8"/><path d="M21 3v5h-5"/><circle cx="12" cy="12" r="1.1" fill="#47474c" stroke="none"/></g></svg><svg style="position:absolute;left:1316.5px;top:200.5px;" width="24" height="24" viewBox="0 0 24 24" fill="none" stroke="#47474c" stroke-width="2" stroke-linecap="round" stroke-linejoin="round"><g transform="translate(-3.4 -3.4) scale(1.28)" stroke-width="1.6"><path d="M21 12a9 9 0 1 1-9-9c2.52 0 4.93 1 6.74 2.74L21 8"/><path d="M21 3v5h-5"/><path d="M11 7v5l3 3"/></g></svg><svg style="position:absolute;left:1316.5px;top:248.5px;" width="24" height="24" viewBox="0 0 24 24" fill="none" stroke="#47474c" stroke-width="2" stroke-linecap="round" stroke-linejoin="round"><g transform="translate(-3.4 -3.4) scale(1.28)" stroke-width="1.6"><path d="M21 12a9 9 0 1 1-9-9c2.52 0 4.93 1 6.74 2.74L21 8"/><path d="M21 3v5h-5"/><text x="11.5" y="14.6" font-size="7.2" text-anchor="middle" fill="none" stroke="#47474c" stroke-width="0.6" font-family="Liberation Sans" font-weight="700">Bs</text></g></svg><svg style="position:absolute;left:1200px;top:90px" width="120" height="54" viewBox="1200 90 120 54"><ellipse cx="1230.5" cy="116.3" rx="15.6" ry="17.8" fill="#fff" stroke="#000" stroke-width="2.9"/><text x="1230" y="124" font-size="21" text-anchor="middle" font-family="Liberation Sans" fill="#000">1</text><path d="M1246 116.4H1304" stroke="#000" stroke-width="2.9"/><path d="M1302.4 111L1314 116.4L1302.4 122Z" fill="#000"/></svg><svg style="position:absolute;left:0;top:0;overflow:visible;pointer-events:none" width="1917" height="908" viewBox="0 0 1917 908"><g fill="none" stroke="#47474c" stroke-width="2" stroke-linecap="round" stroke-linejoin="round"><path d="M10.5 31.5V20.5L20 14L29.5 20.5V31.5"/><path d="M8.5 31.8H31.5"/><path d="M17.5 31.5V26.5a2.5 2.5 0 0 1 5 0V31.5"/></g><g fill="none" stroke="#47474c" stroke-width="2" stroke-linecap="round" stroke-linejoin="round"><circle cx="20" cy="66.6" r="10.8"/><ellipse cx="20" cy="66.6" rx="4.6" ry="10.8"/><path d="M9.5 63H30.5M9.5 70.2H30.5"/></g><g fill="none" stroke="#fff" stroke-width="2.2" stroke-linecap="round" stroke-linejoin="round"><path d="M9.5 103H22M14 111H26.5M18.5 119H30.5"/></g><g fill="none" stroke="#47474c" stroke-width="2" stroke-linecap="round" stroke-linejoin="round"><rect x="9.4" y="144.3" width="21.4" height="21.4" rx="2.5"/><path d="M14.4 149.5V159M19.9 149.5V153.8M25.4 149.5V156.2"/></g><g fill="none" stroke="#47474c" stroke-width="2" stroke-linecap="round" stroke-linejoin="round"><path d="M9 192.8C11 190 14 188.2 18 189.2S25.5 192.5 31 187.6"/><path d="M9.6 201.6H16.2V210.2H9.6Z M16.2 195H23.4V210.2H16.2Z M23.4 199.8H30.8V210.2H23.4Z"/></g><g fill="none" stroke="#47474c" stroke-width="2" stroke-linecap="round" stroke-linejoin="round"><path d="M14 240V234a2.4 2.4 0 0 1 2.4-2.4H28.8a2.4 2.4 0 0 1 2.4 2.4V242.6a2.4 2.4 0 0 1-2.4 2.4H26.5"/><path d="M14 233.5H31" stroke-width="3"/><rect x="9.2" y="241" width="17" height="12.8" rx="2.4"/><path d="M9.5 243.2H26" stroke-width="3"/></g><g fill="none" stroke="#47474c" stroke-width="2" stroke-linecap="round" stroke-linejoin="round"><path d="M10 298V278.5C14 275 19 276.5 22 278.5S27.5 281 30 279.5V291C27 293 24 292.5 21 290.5S14 288 10 290.5"/></g><g fill="none" stroke="#47474c" stroke-width="2" stroke-linecap="round" stroke-linejoin="round"><path d="M8.5 320.2H31.5M8.5 341.8H31.5M9.8 327L15.5 336.4M16.8 327L22.5 336.4M23.8 327L29.6 336.4"/></g><g fill="none" stroke="#47474c" stroke-width="2" stroke-linecap="round" stroke-linejoin="round"><rect x="9.2" y="364.5" width="9" height="8.8"/><rect x="22.3" y="364.5" width="9" height="8.8"/><rect x="9.2" y="377.8" width="9" height="8.8"/><rect x="22.3" y="377.8" width="9" height="8.8"/></g><g fill="none" stroke="#47474c" stroke-width="2" stroke-linecap="round" stroke-linejoin="round"><ellipse cx="20" cy="412.6" rx="11" ry="3.6"/><path d="M9 412.6V427.4C9 429.4 14 431 20 431S31 429.4 31 427.4V412.6"/><path d="M9 420C9 422 14 423.6 20 423.6S31 422 31 420"/></g><g fill="none" stroke="#47474c" stroke-width="1.9" stroke-linecap="round" stroke-linejoin="round"><path d="M12 454H9.5V476.5H12M28 454H30.5V476.5H28"/><path d="M14.8 472.5L20 458.5L25.2 472.5M16.6 467.6H23.4"/></g><g fill="none" stroke="#47474c" stroke-width="2" stroke-linecap="round" stroke-linejoin="round"><rect x="9.3" y="499" width="21.4" height="20.4" rx="2.5"/><path d="M9.3 504.3H30.7M14.8 496.6V499M25.2 496.6V499"/></g><g fill="#47474c" stroke="#47474c" stroke-width="0" stroke-linecap="round" stroke-linejoin="round"><circle cx="14.8" cy="509.5" r="0.9"/><circle cx="20" cy="509.5" r="0.9"/><circle cx="25.2" cy="509.5" r="0.9"/><circle cx="14.8" cy="514.5" r="0.9"/><circle cx="20" cy="514.5" r="0.9"/><circle cx="25.2" cy="514.5" r="0.9"/></g><g fill="none" stroke="#47474c" stroke-width="2" stroke-linecap="round" stroke-linejoin="round"><path d="M8.8 552.6C12 547.6 15.8 545 20 545S28 547.6 31.2 552.6C28 557.6 24.2 560.3 20 560.3S12 557.6 8.8 552.6Z"/><circle cx="20" cy="552.6" r="2.8"/></g><g fill="none" stroke="#47474c" stroke-width="2" stroke-linecap="round" stroke-linejoin="round"><g transform="translate(0 0.8)"><circle cx="20" cy="715.2" r="4.2"/><path d="M20 704.6V706.8M20 723.6V725.8M9.4 715.2H11.6M28.4 715.2H30.6M12.5 707.7L14 709.2M26 721.2L27.5 722.7M12.5 722.7L14 721.2M26 709.2L27.5 707.7"/></g></g><g fill="none" stroke="#47474c" stroke-width="1.9" stroke-linecap="round" stroke-linejoin="round"><path d="M9.3 764.5V753.3a2.6 2.6 0 0 1 2.6-2.6H28.3a2.6 2.6 0 0 1 2.6 2.6V763a2.6 2.6 0 0 1-2.6 2.6H13.3L9.3 769.6Z"/><path d="M14 755.6H25.8M14 759H25.8M14 762.3H21"/></g><g fill="none" stroke="#47474c" stroke-width="2" stroke-linecap="round" stroke-linejoin="round"><path d="M11.5 809.6H28.5a1.3 1.3 0 0 0 0.8-2.3C27.8 806 27 804 27 800.8V800C27 795.9 24 792.8 20 792.8S13 795.9 13 800V800.8C13 804 12.2 806 10.7 807.3a1.3 1.3 0 0 0 0.8 2.3Z"/><path d="M16.8 810C16.8 812.3 18.3 813.6 20 813.6S23.2 812.3 23.2 810"/></g><g fill="none" stroke="#47474c" stroke-width="1.9" stroke-linecap="round" stroke-linejoin="round"><path d="M8.5 840.4H25.5M17.1 837.8V840.4M21.3 841.8C19.5 847.5 15.5 851.5 11.3 854.3M12.8 843.8L19.8 851.5"/><path d="M21.3 858L26.1 846.6L31 858M22.6 854.6H29.8"/></g><g fill="none" stroke="#47474c" stroke-width="2" stroke-linecap="round" stroke-linejoin="round"><circle cx="20" cy="892" r="10.8"/><path d="M20 889.2V897.3"/><circle cx="20" cy="885.8" r="0.6"/></g><g fill="none" stroke="#47474c" stroke-width="2" stroke-linecap="round" stroke-linejoin="round"><path d="M54 27.8L69.5 12.3a2.2 2.2 0 0 1 3.1 0L75.7 15.4a2.2 2.2 0 0 1 0 3.1L60.2 34H54Z"/><path d="M67 15L73 21"/></g><g fill="none" stroke="#47474c" stroke-width="2" stroke-linecap="round" stroke-linejoin="round"><circle cx="115.8" cy="22.8" r="11"/><path d="M116 15.5V22L120 26"/></g><g fill="none" stroke="#47474c" stroke-width="2.1" stroke-linecap="round" stroke-linejoin="round"><path d="M1708.5 11.8H1731.5M1708.5 34.2H1731.5"/><path d="M1714.8 17.5V27M1711.5 24L1714.8 27.5L1718 24M1725 27.3V17.8M1721.6 21L1725 17.5L1728.4 21"/></g><g fill="none" stroke="#47474c" stroke-width="2" stroke-linecap="round" stroke-linejoin="round"><g transform="translate(1749.4 7.6) scale(1.3)" stroke-width="1.55"><path d="M21 12a9 9 0 1 1-9-9c2.52 0 4.93 1 6.74 2.74L21 8"/><path d="M21 3v5h-5"/></g></g><g fill="none" stroke="#47474c" stroke-width="2" stroke-linecap="round" stroke-linejoin="round"><rect x="1799" y="12.5" width="22.8" height="21.8" rx="2.6"/><path d="M1806.5 12.5V34.3"/></g><g fill="none" stroke="#47474c" stroke-width="2" stroke-linecap="round" stroke-linejoin="round"><rect x="1843" y="12.5" width="22.8" height="21.8" rx="2.6"/><path d="M1858.3 12.5V34.3"/></g><g fill="none" stroke="#47474c" stroke-width="2" stroke-linecap="round" stroke-linejoin="round"><rect x="1887" y="12.5" width="22.8" height="21.8" rx="2.6"/><path d="M1887 27H1909.8"/></g><g fill="#47474c" stroke="#47474c" stroke-width="0.5" stroke-linecap="round" stroke-linejoin="round"><path d="M60 64H70L65 69.3Z"/></g><g fill="none" stroke="#47474c" stroke-width="2" stroke-linecap="round" stroke-linejoin="round"><circle cx="544.5" cy="64.3" r="8.8"/><path d="M550.8 70.8L558 78"/></g><g fill="none" stroke="#47474c" stroke-width="2" stroke-linecap="round" stroke-linejoin="round"><path d="M579.5 66.8C582.5 62 586.3 59.5 590.7 59.5S598.9 62 601.9 66.8C598.9 71.6 595.1 74.2 590.7 74.2S582.5 71.6 579.5 66.8Z"/><circle cx="590.7" cy="66.8" r="2.6"/></g><g fill="none" stroke="#47474c" stroke-width="2" stroke-linecap="round" stroke-linejoin="round"><rect x="624.3" y="56.3" width="21" height="21" rx="2.8"/><path d="M625 57.4H644.6" stroke-width="2.2"/><path d="M628.6 77V64.6a2.1 2.1 0 0 1 2.1-2.1H645" /><path d="M636 77V71.6a2.1 2.1 0 0 1 2.1-2.1H645"/></g><g fill="none" stroke="#47474c" stroke-width="2" stroke-linecap="round" stroke-linejoin="round"><path d="M679 59H671.9a2.4 2.4 0 0 0-2.4 2.4V75.1a2.4 2.4 0 0 0 2.4 2.4H686a2.4 2.4 0 0 0 2.4-2.4V64.3"/><path d="M673.5 68.6L677.3 71.8L684 65.4"/><path d="M682.6 58.2L685.1 60.4L690.2 55.3" stroke-width="1.6"/></g><g fill="none" stroke="#47474c" stroke-width="2" stroke-linecap="round" stroke-linejoin="round"><path d="M723.3 59H716.2a2.4 2.4 0 0 0-2.4 2.4V75.1a2.4 2.4 0 0 0 2.4 2.4H730.3a2.4 2.4 0 0 0 2.4-2.4V64.3"/><path d="M717.8 68.6L721.6 71.8L728.3 65.4"/><path d="M729.3 55.5L734.3 60.6M734.3 55.5L729.3 60.6" stroke-width="1.6"/></g><g fill="none" stroke="#47474c" stroke-width="2" stroke-linecap="round" stroke-linejoin="round"><path d="M758 58.5H775.8V60.5L769.4 68.7V76H764.5V68.7L758 60.5Z"/></g><g fill="#47474c" stroke="#47474c" stroke-width="0.5" stroke-linecap="round" stroke-linejoin="round"><path d="M774.5 75.5H781L777.8 78.8Z"/></g><g fill="none" stroke="#47474c" stroke-width="2" stroke-linecap="round" stroke-linejoin="round"><path d="M874.8 67.8L885.8 78.8M885.8 67.8L874.8 78.8"/></g><g fill="none" stroke="#47474c" stroke-width="1.6" stroke-linecap="round" stroke-linejoin="round"><path d="M887.5 55.8H897.6L893.8 60.5V65H891.3V60.5Z"/></g><g fill="#47474c" stroke="#47474c" stroke-width="0.5" stroke-linecap="round" stroke-linejoin="round"><path d="M1087.8 65H1097.8L1092.8 70Z"/></g><g fill="#47474c" stroke="#47474c" stroke-width="0.5" stroke-linecap="round" stroke-linejoin="round"><path d="M1222.3 65H1232.3L1227.3 70Z"/></g><g fill="none" stroke="#47474c" stroke-width="1.8" stroke-linecap="round" stroke-linejoin="round"><path d="M1269.5 74.5H1292.8M1269.5 74.5L1273.5 70.6M1269.5 74.5L1273.5 78.4M1292.8 74.5L1288.8 70.6M1292.8 74.5L1288.8 78.4"/></g><g fill="none" stroke="#47474c" stroke-width="0" stroke-linecap="round" stroke-linejoin="round"><text x="1281.2" y="65.8" font-size="14.6" text-anchor="middle" fill="#47474c" stroke="none" font-family="Liberation Sans" font-weight="700">123</text></g><g fill="none" stroke="#47474c" stroke-width="2" stroke-linecap="round" stroke-linejoin="round"><rect x="1802.5" y="57.8" width="21" height="20.6" rx="3"/><path d="M1802.5 62.8H1823.5M1808.5 55.5V57.8M1817.5 55.5V57.8"/></g><g fill="none" stroke="#47474c" stroke-width="2" stroke-linecap="round" stroke-linejoin="round"><rect x="1846.5" y="57.8" width="21" height="20.6" rx="3"/><path d="M1846.5 62.8H1867.5M1852.5 55.5V57.8M1861.5 55.5V57.8"/></g><g fill="none" stroke="#47474c" stroke-width="2" stroke-linecap="round" stroke-linejoin="round"><rect x="1890.5" y="57.8" width="21" height="20.6" rx="3"/><path d="M1890.5 62.8H1911.5M1896.5 55.5V57.8M1905.5 55.5V57.8"/></g><g fill="none" stroke="#47474c" stroke-width="2.2" stroke-linecap="round" stroke-linejoin="round"><path d="M1809.8 75V67H1816.5M1809.8 71H1815"/></g><g fill="#47474c" stroke="#47474c" stroke-width="1.2" stroke-linecap="round" stroke-linejoin="round"><path d="M1852 70.5L1855 67.5V73.5Z M1863 70.5L1860 67.5V73.5Z"/></g><g fill="none" stroke="#47474c" stroke-width="2" stroke-linecap="round" stroke-linejoin="round"><path d="M1897.5 63V78M1903 63V78M1908.5 63V78"/></g><g fill="none" stroke="#47474c" stroke-width="1.5" stroke-linecap="round" stroke-linejoin="round"><path d="M58 109.5L50.5 117L58 124.5"/></g><g fill="none" stroke="#47474c" stroke-width="1.5" stroke-linecap="round" stroke-linejoin="round"><path d="M1886 94L1894.5 102.5L1886 111"/></g><g fill="none" stroke="#fff" stroke-width="1.5" stroke-linecap="round" stroke-linejoin="round"><path d="M472.5 606C468.6 608 466.9 612 467.8 615.5C468.3 617.5 469.8 619 471.8 619.8M468 620H472.2V615.9"/><path d="M478.4 619.8C482.3 617.8 484 613.8 483.1 610.3C482.6 608.3 481.1 606.8 479.1 606M482.9 605.3H478.5V609.4"/></g><g fill="#47474c" stroke="#47474c" stroke-width="0.5" stroke-linecap="round" stroke-linejoin="round"><path d="M253.5 610.5H263.5L258.5 615.5Z"/></g><g fill="#47474c" stroke="#47474c" stroke-width="0.5" stroke-linecap="round" stroke-linejoin="round"><path d="M1106.5 610.5H1116.5L1111.5 615.5Z"/></g></svg></body></html>
